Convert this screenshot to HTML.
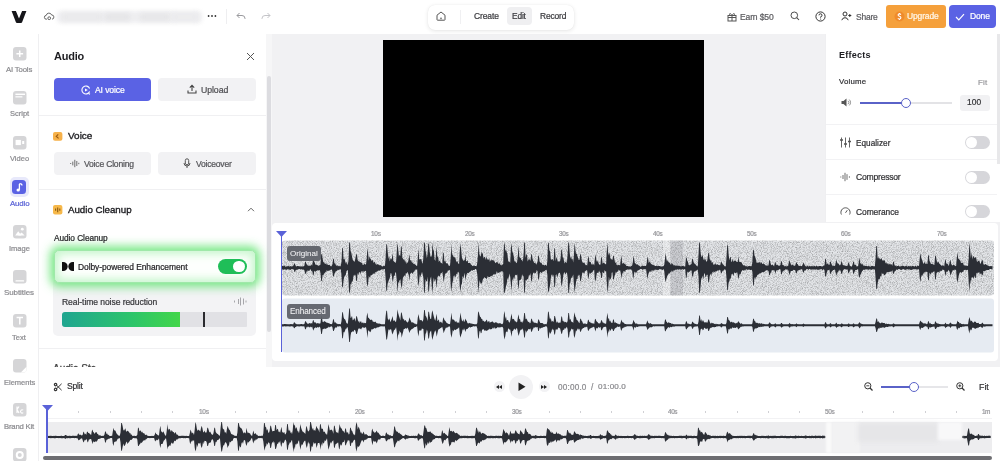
<!DOCTYPE html>
<html><head><meta charset="utf-8">
<style>
*{box-sizing:border-box;margin:0;padding:0}
html,body{width:1000px;height:461px;overflow:hidden;background:#fff;font-family:"Liberation Sans",sans-serif;color:#2a2a2e}
.a{position:absolute}
.t{position:absolute;white-space:nowrap;line-height:1;will-change:transform}
svg{position:absolute;overflow:visible}
</style></head><body>

<!-- canvas gray area -->
<div class="a" style="left:271px;top:34px;width:729px;height:334px;background:#f1f1f3"></div>

<!-- TOP BAR -->
<div class="a" style="left:0;top:0;width:1000px;height:34px;background:#fff"></div>
<svg style="left:11.2px;top:10.8px" width="16" height="12" viewBox="0 0 16 12"><path d="M0.6 0H4.9L8 7.4L11.1 0H15.4L11.1 11.2Q10.8 12 10 12H6Q5.2 12 4.9 11.2Z" fill="#16161a"/></svg>
<svg style="left:43.5px;top:12px" width="10" height="8" viewBox="0 0 10 8"><path d="M3 7.2H2.4A1.9 1.9 0 0 1 2.2 3.4A2.8 2.8 0 0 1 7.6 3A2.1 2.1 0 0 1 8 7.2" fill="none" stroke="#555" stroke-width="0.9"/><circle cx="5.2" cy="6.2" r="1.4" fill="none" stroke="#555" stroke-width="0.9"/></svg>
<div class="a" style="left:57px;top:11px;width:145px;height:12px;background:#efeff1;filter:blur(2px);border-radius:4px"></div>
<div class="a" style="left:62px;top:13px;width:40px;height:8px;background:#e9e9eb;filter:blur(2.5px)"></div>
<div class="a" style="left:105px;top:13px;width:25px;height:8px;background:#e5e5e7;filter:blur(2.5px)"></div>
<div class="a" style="left:140px;top:13px;width:30px;height:8px;background:#e6e6e8;filter:blur(2.5px)"></div>
<div class="a" style="left:172px;top:13px;width:26px;height:8px;background:#ebebed;filter:blur(2.5px)"></div>
<svg style="left:207px;top:14px" width="10" height="4" viewBox="0 0 10 4"><circle cx="1.6" cy="2" r="0.9" fill="#333"/><circle cx="5" cy="2" r="0.9" fill="#333"/><circle cx="8.4" cy="2" r="0.9" fill="#333"/></svg>
<div class="a" style="left:226px;top:9px;width:1px;height:15px;background:#eeeef0"></div>
<svg style="left:236px;top:12px" width="10" height="8" viewBox="0 0 10 8"><path d="M3.5 1L1 3.5L3.5 6M1 3.5H6A3 3 0 0 1 9 6.5V7" fill="none" stroke="#9a9a9e" stroke-width="1"/></svg>
<svg style="left:261px;top:12px" width="10" height="8" viewBox="0 0 10 8"><path d="M6.5 1L9 3.5L6.5 6M9 3.5H4A3 3 0 0 0 1 6.5V7" fill="none" stroke="#c4c4c8" stroke-width="1"/></svg>

<!-- center pill -->
<div class="a" style="left:428px;top:5px;width:146px;height:25px;background:#fff;border-radius:7px;box-shadow:0 1px 4px rgba(0,0,0,0.10),0 0 1px rgba(0,0,0,0.08)"></div>
<svg style="left:436px;top:11px" width="10" height="10" viewBox="0 0 10 10"><path d="M1 4.2L5 1L9 4.2V8.6A.6.6 0 0 1 8.4 9.2H1.6A.6.6 0 0 1 1 8.6Z" fill="none" stroke="#555" stroke-width="1"/><rect x="4.2" y="6.6" width="1.6" height="1.6" fill="#777"/></svg>
<div class="a" style="left:460px;top:10px;width:1px;height:14px;background:#f0f0f2"></div>
<div class="a" style="left:507px;top:7px;width:25px;height:18px;background:#efeff1;border-radius:4px"></div>

<!-- right top -->
<svg style="left:727px;top:12px" width="10" height="10" viewBox="0 0 10 10"><rect x="1" y="3.5" width="8" height="5.5" fill="none" stroke="#555" stroke-width="1"/><path d="M1 5.5H9M5 3.5V9M5 3.5C3.5 0.5 1.5 1.5 3 3.5M5 3.5C6.5 0.5 8.5 1.5 7 3.5" fill="none" stroke="#555" stroke-width="1"/></svg>
<svg style="left:790px;top:11px" width="10" height="10" viewBox="0 0 10 10"><circle cx="4.3" cy="4.3" r="3.3" fill="none" stroke="#444" stroke-width="0.95"/><path d="M6.7 6.7L9 9" stroke="#444" stroke-width="1.05"/></svg>
<svg style="left:815px;top:11px" width="11" height="11" viewBox="0 0 11 11"><circle cx="5.5" cy="5.5" r="4.6" fill="none" stroke="#333" stroke-width="1"/><path d="M4 4.3A1.5 1.5 0 1 1 5.6 5.8V6.6" fill="none" stroke="#333" stroke-width="1"/><circle cx="5.6" cy="8" r=".6" fill="#333"/></svg>
<svg style="left:841px;top:11px" width="11" height="10" viewBox="0 0 11 10"><circle cx="4" cy="3" r="2" fill="none" stroke="#333" stroke-width="1"/><path d="M0.8 9.2A3.3 3.3 0 0 1 7.2 9.2" fill="none" stroke="#333" stroke-width="1"/><path d="M8.8 3V6M7.3 4.5H10.3" stroke="#333" stroke-width="1"/></svg>
<div class="a" style="left:886px;top:5px;width:60px;height:23px;background:#f5a03b;border-radius:3px"></div>
<svg style="left:893.5px;top:11px" width="11" height="11" viewBox="0 0 11 11"><circle cx="5.5" cy="5.5" r="5" fill="#ef8b2c"/><path d="M6.9 3.6Q6.4 2.9 5.4 2.9Q4.1 2.9 4.1 4Q4.1 4.9 5.5 5.3Q6.9 5.7 6.9 6.8Q6.9 8 5.5 8Q4.4 8 3.9 7.2M5.5 2V2.9M5.5 8V9" fill="none" stroke="#fff" stroke-width="1.1"/></svg>
<div class="a" style="left:949px;top:5px;width:47px;height:23px;background:#5a62e4;border-radius:4px"></div>
<svg style="left:955px;top:13px" width="10" height="8" viewBox="0 0 10 8"><path d="M1 4L3.8 6.8L9 1.2" fill="none" stroke="#fff" stroke-width="1.2"/></svg>

<!-- LEFT SIDEBAR -->
<div class="a" style="left:38px;top:34px;width:1px;height:427px;background:#efeff1"></div>
<svg style="left:12.5px;top:46.6px" width="13.5" height="13.5" viewBox="0 0 13.5 13.5"><rect width="13.5" height="13.5" rx="3" fill="#d5d5d7"/><path d="M6.75 3.4V10.1M3.4 6.75H10.1" stroke="#fff" stroke-width="1.5"/></svg>
<svg style="left:12.5px;top:91.1px" width="13.5" height="13.5" viewBox="0 0 13.5 13.5"><rect width="13.5" height="13.5" rx="3" fill="#d5d5d7"/><rect x="2.4" y="2.6" width="9.6" height="1.4" fill="#fff"/><rect x="2.4" y="5.1" width="7" height="1.4" fill="#fff" opacity=".85"/></svg>
<svg style="left:12.5px;top:136.0px" width="13.5" height="13.5" viewBox="0 0 13.5 13.5"><rect width="13.5" height="13.5" rx="3" fill="#d5d5d7"/><rect x="2.6" y="3.9" width="5.3" height="5.2" fill="#fff"/><rect x="9.2" y="5" width="2" height="3" fill="#fff"/></svg>
<div class="a" style="left:9.6px;top:177.2px;width:19.4px;height:19.4px;background:#e8e9fb;border-radius:5px"></div>
<div class="a" style="left:12.3px;top:180px;width:14px;height:14px;background:#5a62e4;border-radius:3.5px"></div>
<svg style="left:16px;top:183px" width="7" height="9" viewBox="0 0 7 9"><path d="M3.4 0.9V6.8" stroke="#fff" stroke-width="1.3"/><path d="M3.4 0.6Q6 0.6 6 2.6" stroke="#fff" stroke-width="1.2" fill="none"/><ellipse cx="2.2" cy="7.1" rx="1.7" ry="1.5" fill="#fff"/></svg>
<svg style="left:12.5px;top:224.5px" width="13.5" height="13.5" viewBox="0 0 13.5 13.5"><rect width="13.5" height="13.5" rx="3" fill="#d5d5d7"/><path d="M2.2 10.4L5.2 6.2L8.4 10.4Z" fill="#fff"/><path d="M5 10.4L8.6 7.6L11.6 10.4Z" fill="#fff"/><circle cx="9.3" cy="4.2" r="1.4" fill="#fff"/></svg>
<svg style="left:12.5px;top:269.5px" width="13.5" height="13.5" viewBox="0 0 13.5 13.5"><rect width="13.5" height="13.5" rx="3" fill="#d5d5d7"/><rect x="2.4" y="10.2" width="8.8" height="1.4" rx=".7" fill="#fff"/></svg>
<svg style="left:12.5px;top:314.0px" width="13.5" height="13.5" viewBox="0 0 13.5 13.5"><rect width="13.5" height="13.5" rx="3" fill="#d5d5d7"/><path d="M3.6 3.6H10M6.8 3.6V10.6" stroke="#fff" stroke-width="1.5"/></svg>
<svg style="left:12.5px;top:358.5px" width="13.5" height="13.5" viewBox="0 0 13.5 13.5"><rect width="13.5" height="13.5" rx="3" fill="#d5d5d7"/><path d="M7.8 13.5L13.5 7.8V10.5A3 3 0 0 1 10.5 13.5Z" fill="#fff"/></svg>
<svg style="left:12.5px;top:403.3px" width="13.5" height="13.5" viewBox="0 0 13.5 13.5"><rect width="13.5" height="13.5" rx="3" fill="#d5d5d7"/><path d="M4 3.5V10M4 6.5L6 3.5M4 6.5L6 10" stroke="#fff" stroke-width="1.2" fill="none"/><path d="M10.2 7.2A1.6 1.6 0 1 0 10.2 9.6" stroke="#fff" stroke-width="1.1" fill="none"/></svg>
<svg style="left:12.5px;top:447.8px" width="13.5" height="13.5" viewBox="0 0 13.5 13.5"><rect width="13.5" height="13.5" rx="3" fill="#d5d5d7"/><circle cx="6.75" cy="7" r="3" stroke="#fff" stroke-width="2" fill="none"/></svg>

<!-- AUDIO PANEL -->
<div class="a" style="left:39px;top:34px;width:232px;height:333px;background:#fff"></div>
<svg style="left:246px;top:52px" width="9" height="9" viewBox="0 0 9 9"><path d="M1 1L8 8M8 1L1 8" stroke="#555" stroke-width="1"/></svg>
<div class="a" style="left:266px;top:34px;width:6px;height:333px;background:#f6f6f7"></div>
<div class="a" style="left:267px;top:76px;width:4px;height:256px;background:#dcdce0;border-radius:2px"></div>

<div class="a" style="left:54px;top:78px;width:97px;height:23px;background:#5a62e4;border-radius:4px"></div>
<svg style="left:81px;top:85px" width="10" height="10" viewBox="0 0 10 10"><path d="M8.6 6.5A4 4 0 1 1 8.6 3.5" fill="none" stroke="#fff" stroke-width="1.1"/><path d="M4 3.4L6.8 5L4 6.6Z" fill="#fff"/><path d="M7.5 8.5L9 9.3" stroke="#fff" stroke-width="1.1"/></svg>
<div class="a" style="left:158px;top:78px;width:98px;height:23px;background:#f2f2f4;border-radius:4px"></div>
<svg style="left:187px;top:84px" width="10" height="10" viewBox="0 0 10 10"><path d="M5 7V1.5M2.8 3.6L5 1.4L7.2 3.6M1 6.5V9H9V6.5" fill="none" stroke="#444" stroke-width="1.1"/></svg>

<div class="a" style="left:39px;top:115px;width:227px;height:1px;background:#f0f0f2"></div>
<svg style="left:53.3px;top:131.8px" width="9.4" height="8.8" viewBox="0 0 9.4 8.8"><rect width="9.4" height="8.8" rx="2" fill="#f6b14a"/><path d="M5.2 2.4L3.3 4.4L5.6 6.4" fill="none" stroke="#9a5a10" stroke-width="1.2"/></svg>
<div class="a" style="left:54px;top:152px;width:97px;height:23px;background:#f2f2f4;border-radius:4px"></div>
<svg style="left:70px;top:159px" width="10" height="9" viewBox="0 0 10 9"><path d="M0.2 4.5H1.2M2.8 2.6V6.4M4.8 0.8V8.2M6.8 2V7M8.8 3.8V5.2" stroke="#555" stroke-width="0.85"/></svg>
<div class="a" style="left:158px;top:152px;width:98px;height:23px;background:#f2f2f4;border-radius:4px"></div>
<svg style="left:183px;top:158px" width="8" height="11" viewBox="0 0 8 11"><rect x="2.3" y="0.8" width="3.4" height="6" rx="1.7" fill="none" stroke="#555" stroke-width="1"/><path d="M1 5A3 3 0 0 0 7 5M4 8V10" fill="none" stroke="#555" stroke-width="1"/></svg>

<div class="a" style="left:39px;top:189px;width:227px;height:1px;background:#f0f0f2"></div>
<svg style="left:53.3px;top:205.3px" width="9.4" height="9.4" viewBox="0 0 9.4 9.4"><rect width="9.4" height="9.4" rx="2" fill="#f6b84a"/><path d="M2.6 3.6V5.8M4.7 2.4V7.2M6.8 3.6V5.8" stroke="#8a5a10" stroke-width="1.1"/></svg>
<svg style="left:247px;top:207px" width="8" height="5" viewBox="0 0 8 5"><path d="M1 4.2L4 1.2L7 4.2" fill="none" stroke="#666" stroke-width="1"/></svg>

<!-- noise reduction card -->
<div class="a" style="left:53px;top:278px;width:203px;height:58px;background:#f3f3f5;border-radius:5px"></div>
<svg style="left:233px;top:297px" width="14" height="9" viewBox="0 0 14 9"><path d="M1.5 3.5V5.5M5.5 2V7M7.5 0.5V8.5M10.5 1.5V7.5M13 3.5V5.5" stroke="#a6a6aa" stroke-width="1"/></svg>
<div class="a" style="left:62px;top:312px;width:185px;height:15px;background:#e1e1e5;border-radius:3px 1px 1px 3px"></div>
<div class="a" style="left:62px;top:312px;width:118px;height:15px;background:linear-gradient(90deg,#1fa590,#2dc56a 60%,#43d64a);border-radius:3px 0 0 3px"></div>
<div class="a" style="left:203px;top:312px;width:1.5px;height:15px;background:#2a2a2e"></div>

<!-- dolby card -->
<div class="a" style="left:54px;top:250px;width:202px;height:33px;border-radius:5px;background:#fdfffd;border:1px solid #9fe8a9;box-shadow:0 0 10px 4px rgba(100,228,115,0.85), inset 0 0 8px 3px rgba(150,236,160,0.55)"></div>
<svg style="left:62px;top:262px" width="12" height="9" viewBox="0 0 12 9"><path d="M0 0H1.2A4.5 4.5 0 0 1 1.2 9H0Z M12 0H10.8A4.5 4.5 0 0 0 10.8 9H12Z" fill="#111"/></svg>
<div class="a" style="left:218px;top:259px;width:29px;height:14.5px;background:#1fbe58;border-radius:8px"></div>
<div class="a" style="left:233px;top:260.5px;width:11.5px;height:11.5px;background:#fff;border-radius:50%"></div>

<div class="a" style="left:39px;top:348px;width:227px;height:1px;background:#f0f0f2"></div>
<div class="t" style="left:53px;top:363.6px;font-size:10px;color:#444;-webkit-text-stroke:0.3px #444;height:3.4px;overflow:hidden">Audio Sta</div>

<!-- VIDEO -->
<div class="a" style="left:383px;top:40px;width:321px;height:177px;background:#000"></div>

<!-- EFFECTS PANEL -->
<div class="a" style="left:825px;top:34px;width:175px;height:188px;background:#fff;border-left:1px solid #efeff1"></div>
<div class="a" style="left:997px;top:34px;width:3px;height:130px;background:#e8e8ea"></div>
<svg style="left:841px;top:98px" width="10" height="9" viewBox="0 0 10 9"><path d="M0.5 3H2.5L5.5 0.5V8.5L2.5 6H0.5Z" fill="#555"/><path d="M7 2.8A2.3 2.3 0 0 1 7 6.2M8.3 1.6A4 4 0 0 1 8.3 7.4" fill="none" stroke="#777" stroke-width="0.8"/></svg>
<div class="a" style="left:860px;top:102px;width:92px;height:1.5px;background:#e3e3e6"></div>
<div class="a" style="left:860px;top:102px;width:46px;height:2px;background:#5a62c8"></div>
<div class="a" style="left:901px;top:97.5px;width:10px;height:10px;border:1.8px solid #5a62c8;background:#fff;border-radius:50%"></div>
<div class="a" style="left:959.5px;top:94.5px;width:30px;height:16.5px;background:#f1f1f3;border-radius:3px"></div>

<div class="a" style="left:826px;top:124px;width:171px;height:1px;background:#f2f2f4"></div>
<div class="a" style="left:826px;top:159px;width:171px;height:1px;background:#f2f2f4"></div>
<div class="a" style="left:826px;top:194px;width:171px;height:1px;background:#f2f2f4"></div>
<svg style="left:839.5px;top:137px" width="11" height="11" viewBox="0 0 11 11"><path d="M1.5 0.5V10.5M5.5 0.5V10.5M9.5 0.5V10.5" stroke="#555" stroke-width="0.9"/><path d="M0 3H3M4 7H7M8 4.5H11" stroke="#555" stroke-width="1.3"/></svg>
<svg style="left:839.5px;top:172px" width="11" height="10" viewBox="0 0 11 10"><path d="M0.3 5H1.3M3 3V7M5 0.8V9.2M7 2.2V7.8M9.4 4.3V5.7" stroke="#555" stroke-width="0.85"/></svg>
<svg style="left:839.5px;top:206px" width="11" height="10" viewBox="0 0 11 10"><path d="M1.4 8.5A4.6 4.6 0 1 1 9.6 8.5" fill="none" stroke="#555" stroke-width="1"/><path d="M5.5 6.8L7.3 4.2" stroke="#555" stroke-width="1"/></svg>
<div class="a" style="left:964.5px;top:136px;width:25px;height:13px;background:#d6d6da;border-radius:7px"></div>
<div class="a" style="left:965.5px;top:137px;width:11px;height:11px;background:#fff;border-radius:50%"></div>
<div class="a" style="left:964.5px;top:171px;width:25px;height:13px;background:#d6d6da;border-radius:7px"></div>
<div class="a" style="left:965.5px;top:172px;width:11px;height:11px;background:#fff;border-radius:50%"></div>
<div class="a" style="left:964.5px;top:205px;width:25px;height:13px;background:#d6d6da;border-radius:7px"></div>
<div class="a" style="left:965.5px;top:206px;width:11px;height:11px;background:#fff;border-radius:50%"></div>

<!-- COMPARE PANEL -->
<div class="a" style="left:272px;top:222.5px;width:726px;height:138.3px;background:#fff;border-radius:4px"></div>
<svg style="left:0;top:0" width="1000" height="461" viewBox="0 0 1000 461">
<defs>
<filter id="nz" x="0" y="0" width="100%" height="100%">
<feTurbulence type="fractalNoise" baseFrequency="1.2" numOctaves="1" seed="4" result="n"/>
<feColorMatrix in="n" type="matrix" values="0 0 0 0 0  0 0 0 0 0  0 0 0 0 0  0 0 0 -2.2 1.3"/>
</filter>
<clipPath id="oc"><rect x="282" y="240.5" width="712" height="55" rx="3"/></clipPath>
</defs>
<rect x="282" y="240.5" width="712" height="55" rx="3" fill="#e3e5e8"/>
<rect x="282" y="240.5" width="712" height="55" fill="#9a9ca2" filter="url(#nz)" clip-path="url(#oc)" opacity="0.32"/>
<rect x="663" y="240.5" width="7" height="55" fill="#fff" opacity="0.3"/>
<rect x="670.5" y="240.5" width="12.5" height="55" fill="#7a7c82" opacity="0.22"/>
<path d="M282.0 265.8 L282.7 265.9 L283.4 266.2 L284.1 265.6 L284.8 265.8 L285.5 266.7 L286.2 266.5 L286.9 266.2 L287.6 266.2 L288.3 266.1 L289.0 266.3 L289.7 266.4 L290.4 265.9 L291.1 266.5 L291.8 266.3 L292.5 266.3 L293.2 266.0 L293.9 264.3 L294.6 263.3 L295.3 264.7 L296.0 266.4 L296.7 266.2 L297.4 266.1 L298.1 265.9 L298.8 266.2 L299.5 266.3 L300.2 266.5 L300.9 266.3 L301.6 266.5 L302.3 266.6 L303.0 266.3 L303.7 266.5 L304.4 265.6 L305.1 261.8 L305.8 261.8 L306.5 264.2 L307.2 264.5 L307.9 265.7 L308.6 265.7 L309.3 265.4 L310.0 265.9 L310.7 265.6 L311.4 264.5 L312.1 265.8 L312.8 261.3 L313.5 259.4 L314.2 261.4 L314.9 262.9 L315.6 265.1 L316.3 264.4 L317.0 265.1 L317.7 265.3 L318.4 266.0 L319.1 264.9 L319.8 265.5 L320.5 264.2 L321.2 254.2 L321.9 254.2 L322.6 258.4 L323.3 261.9 L324.0 262.6 L324.7 263.4 L325.4 264.0 L326.1 262.9 L326.8 264.7 L327.5 264.2 L328.2 265.1 L328.9 265.1 L329.6 264.7 L330.3 265.7 L331.0 266.4 L331.7 266.1 L332.4 264.5 L333.1 258.8 L333.8 258.8 L334.5 263.6 L335.2 263.3 L335.9 265.2 L336.6 265.7 L337.3 265.2 L338.0 266.4 L338.7 265.8 L339.4 266.1 L340.1 266.4 L340.8 265.7 L341.5 261.4 L342.2 247.9 L342.9 247.9 L343.6 259.6 L344.3 258.3 L345.0 260.2 L345.7 263.6 L346.4 261.4 L347.1 264.8 L347.8 264.2 L348.5 260.6 L349.2 242.4 L349.9 242.4 L350.6 251.0 L351.3 252.5 L352.0 256.6 L352.7 259.4 L353.4 260.8 L354.1 261.4 L354.8 261.6 L355.5 257.6 L356.2 254.2 L356.9 254.2 L357.6 259.6 L358.3 261.5 L359.0 260.8 L359.7 262.1 L360.4 262.0 L361.1 262.9 L361.8 262.3 L362.5 264.8 L363.2 264.7 L363.9 264.4 L364.6 263.6 L365.3 264.2 L366.0 264.8 L366.7 258.6 L367.4 247.9 L368.1 252.6 L368.8 260.7 L369.5 256.0 L370.2 258.2 L370.9 259.3 L371.6 261.1 L372.3 260.1 L373.0 260.5 L373.7 263.1 L374.4 261.5 L375.1 262.7 L375.8 264.3 L376.5 264.7 L377.2 264.0 L377.9 264.5 L378.6 264.6 L379.3 265.0 L380.0 265.4 L380.7 265.1 L381.4 265.8 L382.1 266.6 L382.8 266.6 L383.5 265.8 L384.2 265.7 L384.9 266.3 L385.6 258.6 L386.3 244.3 L387.0 244.3 L387.7 251.8 L388.4 258.9 L389.1 255.9 L389.8 261.6 L390.5 258.3 L391.2 259.6 L391.9 258.0 L392.6 252.7 L393.3 260.8 L394.0 261.6 L394.7 262.1 L395.4 263.0 L396.1 261.4 L396.8 251.1 L397.5 242.4 L398.2 249.3 L398.9 256.5 L399.6 254.8 L400.3 256.3 L401.0 246.5 L401.7 246.7 L402.4 257.7 L403.1 258.7 L403.8 259.7 L404.5 259.6 L405.2 262.7 L405.9 260.0 L406.6 263.9 L407.3 262.6 L408.0 262.5 L408.7 258.6 L409.4 254.2 L410.1 260.6 L410.8 259.9 L411.5 261.5 L412.2 262.9 L412.9 262.6 L413.6 263.9 L414.3 263.8 L415.0 264.6 L415.7 264.8 L416.4 265.7 L417.1 266.0 L417.8 257.9 L418.5 248.2 L419.2 259.1 L419.9 259.5 L420.6 259.1 L421.3 259.3 L422.0 262.3 L422.7 263.7 L423.4 257.3 L424.1 242.4 L424.8 242.4 L425.5 250.5 L426.2 253.5 L426.9 258.6 L427.6 253.2 L428.3 243.7 L429.0 243.7 L429.7 251.8 L430.4 256.5 L431.1 256.8 L431.8 256.0 L432.5 242.4 L433.2 249.4 L433.9 251.1 L434.6 259.6 L435.3 261.0 L436.0 253.8 L436.7 246.7 L437.4 257.1 L438.1 256.2 L438.8 262.0 L439.5 260.4 L440.2 261.2 L440.9 263.0 L441.6 263.1 L442.3 264.0 L443.0 253.1 L443.7 252.7 L444.4 262.1 L445.1 260.1 L445.8 262.4 L446.5 263.4 L447.2 263.3 L447.9 263.7 L448.6 265.6 L449.3 266.0 L450.0 265.8 L450.7 257.7 L451.4 243.7 L452.1 255.7 L452.8 253.7 L453.5 257.0 L454.2 257.2 L454.9 257.3 L455.6 258.5 L456.3 262.4 L457.0 260.6 L457.7 262.1 L458.4 264.1 L459.1 263.9 L459.8 250.5 L460.5 243.1 L461.2 250.2 L461.9 257.5 L462.6 259.1 L463.3 261.3 L464.0 259.4 L464.7 260.7 L465.4 254.2 L466.1 261.6 L466.8 261.1 L467.5 260.0 L468.2 262.9 L468.9 263.0 L469.6 262.7 L470.3 263.0 L471.0 264.7 L471.7 264.9 L472.4 265.9 L473.1 265.9 L473.8 265.2 L474.5 265.7 L475.2 266.1 L475.9 265.9 L476.6 266.3 L477.3 262.6 L478.0 253.5 L478.7 242.4 L479.4 254.1 L480.1 256.3 L480.8 256.2 L481.5 251.9 L482.2 252.8 L482.9 254.0 L483.6 258.4 L484.3 256.9 L485.0 256.7 L485.7 260.0 L486.4 255.8 L487.1 260.3 L487.8 258.6 L488.5 260.2 L489.2 258.0 L489.9 261.8 L490.6 260.4 L491.3 259.6 L492.0 260.7 L492.7 259.8 L493.4 260.5 L494.1 260.6 L494.8 262.0 L495.5 263.2 L496.2 262.4 L496.9 261.8 L497.6 262.5 L498.3 263.4 L499.0 264.1 L499.7 263.1 L500.4 264.8 L501.1 265.1 L501.8 265.6 L502.5 264.4 L503.2 264.0 L503.9 244.9 L504.6 242.4 L505.3 251.4 L506.0 249.0 L506.7 252.2 L507.4 253.5 L508.1 260.6 L508.8 261.9 L509.5 261.5 L510.2 263.0 L510.9 247.8 L511.6 243.7 L512.3 251.7 L513.0 252.9 L513.7 256.0 L514.4 261.4 L515.1 260.9 L515.8 262.2 L516.5 263.3 L517.2 261.6 L517.9 254.4 L518.6 245.2 L519.3 256.5 L520.0 258.0 L520.7 257.7 L521.4 260.3 L522.1 259.8 L522.8 261.7 L523.5 255.6 L524.2 242.4 L524.9 242.4 L525.6 257.7 L526.3 254.2 L527.0 254.6 L527.7 261.5 L528.4 259.8 L529.1 258.6 L529.8 260.1 L530.5 260.7 L531.2 254.2 L531.9 254.2 L532.6 259.0 L533.3 261.0 L534.0 262.5 L534.7 262.9 L535.4 262.5 L536.1 264.8 L536.8 263.4 L537.5 262.0 L538.2 255.8 L538.9 255.8 L539.6 261.6 L540.3 263.1 L541.0 262.3 L541.7 263.2 L542.4 264.8 L543.1 265.1 L543.8 264.8 L544.5 265.5 L545.2 265.1 L545.9 265.1 L546.6 266.2 L547.3 261.5 L548.0 243.4 L548.7 242.4 L549.4 250.5 L550.1 251.1 L550.8 259.3 L551.5 259.8 L552.2 258.9 L552.9 259.4 L553.6 261.3 L554.3 248.2 L555.0 248.2 L555.7 261.1 L556.4 257.4 L557.1 258.3 L557.8 261.8 L558.5 261.6 L559.2 260.8 L559.9 262.1 L560.6 258.0 L561.3 249.7 L562.0 249.7 L562.7 257.4 L563.4 257.6 L564.1 261.4 L564.8 263.6 L565.5 261.5 L566.2 262.0 L566.9 263.3 L567.6 254.1 L568.3 242.4 L569.0 242.4 L569.7 252.5 L570.4 258.8 L571.1 255.8 L571.8 259.4 L572.5 258.5 L573.2 262.6 L573.9 254.9 L574.6 242.4 L575.3 249.1 L576.0 253.8 L576.7 253.5 L577.4 255.7 L578.1 257.9 L578.8 260.0 L579.5 259.8 L580.2 254.2 L580.9 254.2 L581.6 259.1 L582.3 262.5 L583.0 262.2 L583.7 263.0 L584.4 262.5 L585.1 264.2 L585.8 265.3 L586.5 265.0 L587.2 265.6 L587.9 258.4 L588.6 255.8 L589.3 261.6 L590.0 261.9 L590.7 262.0 L591.4 264.1 L592.1 265.1 L592.8 263.7 L593.5 264.3 L594.2 265.6 L594.9 258.5 L595.6 254.2 L596.3 259.8 L597.0 262.1 L597.7 260.8 L598.4 262.4 L599.1 264.8 L599.8 264.5 L600.5 264.8 L601.2 257.3 L601.9 257.3 L602.6 264.0 L603.3 262.4 L604.0 263.1 L604.7 263.6 L605.4 263.9 L606.1 264.6 L606.8 250.7 L607.5 242.4 L608.2 255.6 L608.9 252.6 L609.6 253.6 L610.3 257.8 L611.0 259.5 L611.7 259.2 L612.4 260.1 L613.1 255.8 L613.8 255.8 L614.5 259.7 L615.2 263.2 L615.9 262.0 L616.6 264.7 L617.3 265.4 L618.0 264.4 L618.7 264.9 L619.4 265.1 L620.1 265.4 L620.8 259.1 L621.5 255.8 L622.2 263.0 L622.9 264.0 L623.6 262.5 L624.3 263.7 L625.0 264.0 L625.7 264.7 L626.4 265.9 L627.1 265.9 L627.8 266.0 L628.5 266.5 L629.2 266.2 L629.9 266.5 L630.6 266.7 L631.3 265.7 L632.0 265.8 L632.7 263.3 L633.4 255.8 L634.1 258.7 L634.8 263.1 L635.5 263.4 L636.2 264.4 L636.9 264.4 L637.6 264.3 L638.3 265.1 L639.0 265.7 L639.7 265.9 L640.4 266.7 L641.1 266.5 L641.8 265.8 L642.5 265.8 L643.2 266.1 L643.9 265.9 L644.6 265.8 L645.3 266.0 L646.0 266.1 L646.7 263.6 L647.4 256.4 L648.1 259.0 L648.8 263.2 L649.5 261.3 L650.2 262.8 L650.9 263.4 L651.6 264.3 L652.3 264.4 L653.0 265.3 L653.7 264.9 L654.4 265.4 L655.1 266.0 L655.8 266.1 L656.5 265.8 L657.2 266.2 L657.9 265.7 L658.6 265.8 L659.3 266.1 L660.0 266.1 L660.7 266.5 L661.4 266.6 L662.1 266.3 L662.8 266.5 L663.5 266.0 L664.2 265.0 L664.9 259.3 L665.6 252.7 L666.3 257.9 L667.0 261.8 L667.7 260.0 L668.4 261.7 L669.1 262.8 L669.8 262.6 L670.5 264.9 L671.2 262.8 L671.9 264.7 L672.6 263.6 L673.3 264.7 L674.0 265.8 L674.7 265.1 L675.4 265.7 L676.1 265.5 L676.8 265.7 L677.5 265.6 L678.2 266.1 L678.9 265.7 L679.6 266.0 L680.3 266.1 L681.0 266.7 L681.7 266.1 L682.4 265.9 L683.1 265.7 L683.8 266.2 L684.5 266.4 L685.2 266.5 L685.9 258.6 L686.6 257.3 L687.3 260.7 L688.0 262.0 L688.7 265.0 L689.4 265.4 L690.1 264.4 L690.8 264.8 L691.5 263.8 L692.2 258.8 L692.9 258.8 L693.6 262.2 L694.3 263.3 L695.0 264.2 L695.7 264.6 L696.4 265.6 L697.1 266.2 L697.8 266.3 L698.5 255.3 L699.2 242.4 L699.9 242.4 L700.6 252.4 L701.3 257.3 L702.0 255.9 L702.7 255.4 L703.4 259.1 L704.1 260.6 L704.8 258.3 L705.5 259.6 L706.2 261.3 L706.9 261.8 L707.6 258.7 L708.3 252.7 L709.0 252.7 L709.7 259.1 L710.4 260.8 L711.1 260.0 L711.8 262.9 L712.5 261.7 L713.2 264.2 L713.9 264.9 L714.6 264.3 L715.3 262.9 L716.0 264.8 L716.7 264.4 L717.4 264.3 L718.1 265.1 L718.8 264.7 L719.5 265.2 L720.2 265.3 L720.9 262.5 L721.6 261.8 L722.3 263.6 L723.0 264.5 L723.7 265.0 L724.4 265.9 L725.1 266.5 L725.8 266.0 L726.5 257.3 L727.2 245.2 L727.9 245.2 L728.6 254.1 L729.3 260.2 L730.0 257.8 L730.7 256.5 L731.4 262.2 L732.1 260.9 L732.8 258.4 L733.5 261.9 L734.2 260.8 L734.9 260.7 L735.6 260.6 L736.3 261.4 L737.0 262.1 L737.7 262.1 L738.4 255.8 L739.1 262.0 L739.8 261.7 L740.5 262.1 L741.2 262.3 L741.9 263.1 L742.6 264.4 L743.3 265.6 L744.0 265.0 L744.7 265.6 L745.4 266.4 L746.1 265.6 L746.8 266.4 L747.5 266.4 L748.2 266.1 L748.9 266.2 L749.6 265.7 L750.3 266.6 L751.0 265.6 L751.7 266.4 L752.4 261.7 L753.1 249.7 L753.8 249.7 L754.5 255.8 L755.2 256.7 L755.9 259.5 L756.6 262.9 L757.3 262.4 L758.0 262.8 L758.7 262.5 L759.4 261.4 L760.1 263.7 L760.8 262.2 L761.5 262.3 L762.2 263.8 L762.9 264.1 L763.6 263.3 L764.3 264.1 L765.0 264.8 L765.7 265.5 L766.4 265.5 L767.1 265.4 L767.8 265.4 L768.5 265.4 L769.2 260.3 L769.9 260.3 L770.6 263.6 L771.3 265.6 L772.0 264.6 L772.7 264.7 L773.4 265.5 L774.1 266.5 L774.8 262.8 L775.5 261.8 L776.2 265.2 L776.9 264.2 L777.6 265.1 L778.3 265.5 L779.0 265.7 L779.7 265.7 L780.4 265.1 L781.1 261.2 L781.8 261.2 L782.5 264.9 L783.2 265.1 L783.9 265.6 L784.6 266.4 L785.3 265.7 L786.0 266.6 L786.7 266.3 L787.4 265.9 L788.1 266.2 L788.8 262.3 L789.5 260.3 L790.2 262.6 L790.9 264.4 L791.6 265.6 L792.3 264.5 L793.0 264.8 L793.7 265.8 L794.4 265.7 L795.1 265.7 L795.8 263.8 L796.5 261.8 L797.2 263.9 L797.9 264.2 L798.6 265.8 L799.3 266.1 L800.0 265.8 L800.7 265.8 L801.4 266.2 L802.1 265.7 L802.8 264.2 L803.5 262.4 L804.2 264.1 L804.9 265.4 L805.6 266.3 L806.3 266.5 L807.0 266.3 L807.7 265.7 L808.4 266.6 L809.1 266.2 L809.8 265.8 L810.5 266.6 L811.2 265.7 L811.9 266.5 L812.6 265.9 L813.3 266.6 L814.0 265.6 L814.7 265.9 L815.4 266.7 L816.1 265.7 L816.8 265.8 L817.5 266.6 L818.2 266.6 L818.9 265.9 L819.6 266.1 L820.3 266.0 L821.0 265.9 L821.7 266.6 L822.4 266.5 L823.1 265.8 L823.8 265.7 L824.5 265.2 L825.2 258.8 L825.9 258.8 L826.6 264.5 L827.3 263.3 L828.0 263.9 L828.7 264.7 L829.4 265.0 L830.1 261.8 L830.8 261.8 L831.5 264.1 L832.2 265.2 L832.9 266.2 L833.6 265.5 L834.3 265.7 L835.0 266.1 L835.7 262.4 L836.4 259.4 L837.1 262.5 L837.8 263.6 L838.5 263.6 L839.2 264.8 L839.9 265.4 L840.6 264.6 L841.3 261.8 L842.0 261.8 L842.7 264.7 L843.4 265.2 L844.1 265.3 L844.8 265.6 L845.5 265.7 L846.2 265.8 L846.9 266.1 L847.6 265.8 L848.3 262.4 L849.0 262.4 L849.7 265.5 L850.4 265.9 L851.1 266.6 L851.8 266.5 L852.5 264.8 L853.2 261.8 L853.9 261.8 L854.6 265.0 L855.3 264.7 L856.0 265.1 L856.7 266.6 L857.4 266.3 L858.1 266.2 L858.8 261.8 L859.5 257.3 L860.2 263.8 L860.9 263.0 L861.6 264.6 L862.3 264.3 L863.0 264.2 L863.7 265.9 L864.4 265.5 L865.1 265.7 L865.8 266.0 L866.5 266.1 L867.2 265.9 L867.9 266.4 L868.6 265.8 L869.3 266.6 L870.0 266.2 L870.7 266.7 L871.4 265.8 L872.1 265.9 L872.8 265.9 L873.5 266.2 L874.2 266.3 L874.9 266.2 L875.6 257.3 L876.3 246.1 L877.0 246.1 L877.7 258.6 L878.4 256.7 L879.1 259.4 L879.8 257.4 L880.5 259.8 L881.2 258.0 L881.9 259.2 L882.6 260.8 L883.3 260.5 L884.0 260.3 L884.7 260.3 L885.4 262.4 L886.1 263.8 L886.8 262.4 L887.5 263.6 L888.2 264.7 L888.9 263.5 L889.6 264.3 L890.3 264.5 L891.0 263.9 L891.7 264.4 L892.4 265.8 L893.1 261.8 L893.8 261.8 L894.5 265.1 L895.2 266.1 L895.9 265.2 L896.6 266.4 L897.3 265.9 L898.0 266.0 L898.7 265.5 L899.4 266.4 L900.1 266.3 L900.8 266.5 L901.5 265.9 L902.2 265.7 L902.9 265.4 L903.6 266.0 L904.3 266.3 L905.0 266.4 L905.7 265.8 L906.4 265.7 L907.1 266.5 L907.8 266.6 L908.5 265.7 L909.2 266.4 L909.9 265.7 L910.6 266.2 L911.3 266.6 L912.0 266.0 L912.7 265.8 L913.4 266.0 L914.1 266.4 L914.8 266.5 L915.5 265.5 L916.2 266.5 L916.9 266.4 L917.6 265.5 L918.3 265.8 L919.0 266.1 L919.7 258.4 L920.4 252.7 L921.1 257.6 L921.8 259.3 L922.5 260.7 L923.2 263.7 L923.9 263.2 L924.6 261.8 L925.3 264.2 L926.0 262.9 L926.7 264.0 L927.4 263.9 L928.1 255.2 L928.8 255.2 L929.5 261.0 L930.2 262.3 L930.9 263.8 L931.6 264.0 L932.3 263.8 L933.0 264.4 L933.7 264.5 L934.4 265.1 L935.1 255.8 L935.8 255.8 L936.5 259.6 L937.2 263.0 L937.9 261.5 L938.6 262.1 L939.3 263.8 L940.0 264.0 L940.7 264.9 L941.4 265.6 L942.1 266.0 L942.8 265.1 L943.5 265.4 L944.2 266.4 L944.9 261.3 L945.6 258.8 L946.3 263.6 L947.0 263.8 L947.7 263.8 L948.4 265.9 L949.1 264.7 L949.8 261.3 L950.5 259.4 L951.2 263.8 L951.9 265.2 L952.6 265.4 L953.3 264.4 L954.0 265.3 L954.7 265.3 L955.4 266.1 L956.1 266.3 L956.8 257.5 L957.5 252.7 L958.2 258.7 L958.9 258.7 L959.6 260.1 L960.3 260.4 L961.0 263.0 L961.7 262.7 L962.4 262.8 L963.1 263.1 L963.8 265.2 L964.5 265.6 L965.2 265.3 L965.9 265.9 L966.6 265.8 L967.3 265.7 L968.0 266.0 L968.7 258.2 L969.4 242.4 L970.1 248.8 L970.8 258.3 L971.5 252.3 L972.2 259.5 L972.9 256.6 L973.6 255.9 L974.3 258.2 L975.0 257.2 L975.7 257.3 L976.4 259.1 L977.1 262.3 L977.8 261.0 L978.5 260.7 L979.2 260.6 L979.9 262.6 L980.6 264.3 L981.3 261.8 L982.0 260.1 L982.7 260.3 L983.4 263.9 L984.1 265.0 L984.8 264.2 L985.5 264.1 L986.2 264.5 L986.9 265.0 L987.6 265.6 L988.3 265.4 L989.0 266.3 L989.7 266.3 L990.4 265.9 L991.1 266.2 L991.8 266.1 L992.5 266.3 L992.5 269.8 L991.8 269.2 L991.1 269.0 L990.4 268.9 L989.7 268.9 L989.0 269.9 L988.3 270.1 L987.6 269.9 L986.9 270.2 L986.2 270.1 L985.5 270.8 L984.8 271.6 L984.1 270.9 L983.4 271.0 L982.7 275.2 L982.0 275.2 L981.3 273.4 L980.6 273.6 L979.9 274.7 L979.2 272.1 L978.5 272.6 L977.8 273.6 L977.1 272.5 L976.4 273.6 L975.7 278.1 L975.0 278.1 L974.3 275.3 L973.6 279.1 L972.9 277.6 L972.2 276.9 L971.5 277.8 L970.8 284.1 L970.1 279.6 L969.4 292.7 L968.7 281.8 L968.0 269.9 L967.3 269.8 L966.6 270.2 L965.9 270.0 L965.2 269.7 L964.5 270.0 L963.8 270.2 L963.1 272.3 L962.4 271.6 L961.7 273.6 L961.0 271.9 L960.3 272.2 L959.6 272.7 L958.9 274.9 L958.2 278.8 L957.5 282.5 L956.8 280.0 L956.1 270.1 L955.4 269.7 L954.7 269.5 L954.0 270.6 L953.3 270.1 L952.6 270.4 L951.9 272.0 L951.2 273.7 L950.5 276.1 L949.8 272.2 L949.1 270.7 L948.4 269.7 L947.7 271.6 L947.0 271.7 L946.3 271.7 L945.6 276.6 L944.9 272.7 L944.2 269.9 L943.5 270.1 L942.8 269.2 L942.1 270.5 L941.4 270.9 L940.7 271.3 L940.0 270.4 L939.3 272.8 L938.6 272.1 L937.9 271.8 L937.2 272.6 L936.5 272.9 L935.8 279.6 L935.1 279.6 L934.4 270.9 L933.7 271.6 L933.0 272.3 L932.3 272.5 L931.6 272.2 L930.9 274.5 L930.2 273.7 L929.5 272.6 L928.8 280.2 L928.1 280.2 L927.4 272.1 L926.7 271.9 L926.0 271.4 L925.3 271.9 L924.6 272.1 L923.9 274.2 L923.2 272.4 L922.5 275.9 L921.8 275.1 L921.1 276.9 L920.4 282.5 L919.7 277.5 L919.0 269.2 L918.3 269.2 L917.6 269.6 L916.9 269.7 L916.2 268.9 L915.5 269.3 L914.8 269.0 L914.1 269.6 L913.4 269.0 L912.7 269.4 L912.0 269.8 L911.3 270.0 L910.6 269.8 L909.9 269.9 L909.2 269.1 L908.5 269.7 L907.8 269.3 L907.1 269.2 L906.4 269.5 L905.7 269.7 L905.0 270.0 L904.3 269.4 L903.6 269.1 L902.9 269.4 L902.2 269.2 L901.5 269.9 L900.8 270.0 L900.1 269.4 L899.4 269.1 L898.7 269.1 L898.0 269.3 L897.3 270.2 L896.6 269.3 L895.9 270.4 L895.2 271.1 L894.5 271.6 L893.8 273.7 L893.1 273.7 L892.4 270.3 L891.7 271.3 L891.0 271.7 L890.3 271.5 L889.6 271.7 L888.9 272.6 L888.2 271.9 L887.5 272.3 L886.8 272.1 L886.1 273.4 L885.4 274.5 L884.7 275.2 L884.0 275.2 L883.3 273.5 L882.6 274.3 L881.9 272.6 L881.2 277.1 L880.5 275.7 L879.8 278.8 L879.1 279.5 L878.4 279.2 L877.7 283.0 L877.0 289.0 L876.3 289.0 L875.6 278.6 L874.9 269.5 L874.2 269.4 L873.5 269.6 L872.8 269.0 L872.1 269.4 L871.4 269.9 L870.7 269.6 L870.0 269.6 L869.3 269.3 L868.6 269.9 L867.9 269.2 L867.2 269.7 L866.5 269.3 L865.8 269.7 L865.1 269.0 L864.4 270.2 L863.7 269.6 L863.0 270.3 L862.3 271.0 L861.6 272.2 L860.9 274.0 L860.2 275.0 L859.5 278.1 L858.8 276.5 L858.1 269.2 L857.4 269.2 L856.7 270.0 L856.0 270.0 L855.3 270.0 L854.6 271.7 L853.9 273.7 L853.2 273.7 L852.5 269.6 L851.8 269.5 L851.1 269.5 L850.4 269.6 L849.7 270.7 L849.0 273.1 L848.3 273.1 L847.6 269.7 L846.9 269.1 L846.2 269.9 L845.5 269.2 L844.8 269.1 L844.1 269.2 L843.4 270.0 L842.7 271.0 L842.0 273.7 L841.3 273.7 L840.6 271.0 L839.9 269.6 L839.2 270.9 L838.5 270.4 L837.8 272.9 L837.1 271.9 L836.4 276.1 L835.7 273.3 L835.0 269.6 L834.3 269.7 L833.6 269.9 L832.9 270.3 L832.2 271.2 L831.5 271.7 L830.8 273.7 L830.1 273.7 L829.4 269.4 L828.7 270.2 L828.0 270.1 L827.3 270.5 L826.6 273.2 L825.9 276.6 L825.2 276.6 L824.5 270.4 L823.8 268.9 L823.1 269.8 L822.4 269.9 L821.7 269.2 L821.0 269.1 L820.3 269.5 L819.6 269.5 L818.9 269.8 L818.2 269.7 L817.5 269.8 L816.8 269.8 L816.1 269.0 L815.4 269.8 L814.7 269.7 L814.0 269.0 L813.3 269.8 L812.6 269.6 L811.9 269.6 L811.2 269.8 L810.5 269.6 L809.8 269.1 L809.1 269.0 L808.4 269.9 L807.7 269.2 L807.0 268.9 L806.3 269.2 L805.6 270.4 L804.9 270.0 L804.2 271.2 L803.5 273.1 L802.8 271.6 L802.1 269.2 L801.4 269.3 L800.7 269.4 L800.0 269.8 L799.3 270.1 L798.6 270.4 L797.9 270.2 L797.2 271.5 L796.5 273.7 L795.8 272.3 L795.1 269.9 L794.4 270.0 L793.7 269.7 L793.0 270.6 L792.3 270.9 L791.6 271.1 L790.9 271.0 L790.2 272.7 L789.5 275.2 L788.8 271.9 L788.1 270.0 L787.4 269.6 L786.7 269.5 L786.0 269.6 L785.3 269.3 L784.6 270.4 L783.9 270.3 L783.2 271.5 L782.5 271.4 L781.8 274.3 L781.1 274.3 L780.4 269.2 L779.7 268.9 L779.0 269.4 L778.3 270.1 L777.6 270.3 L776.9 270.4 L776.2 270.3 L775.5 273.7 L774.8 271.8 L774.1 269.8 L773.4 270.4 L772.7 270.4 L772.0 269.7 L771.3 272.0 L770.6 272.8 L769.9 275.2 L769.2 275.2 L768.5 270.9 L767.8 270.5 L767.1 270.3 L766.4 270.0 L765.7 270.5 L765.0 271.4 L764.3 271.8 L763.6 272.3 L762.9 272.2 L762.2 271.9 L761.5 272.8 L760.8 272.9 L760.1 273.5 L759.4 273.5 L758.7 274.4 L758.0 274.4 L757.3 275.2 L756.6 277.1 L755.9 277.1 L755.2 279.5 L754.5 276.9 L753.8 285.5 L753.1 285.5 L752.4 271.6 L751.7 269.7 L751.0 269.9 L750.3 269.9 L749.6 269.4 L748.9 269.9 L748.2 269.3 L747.5 269.9 L746.8 269.5 L746.1 269.0 L745.4 270.2 L744.7 269.7 L744.0 271.0 L743.3 270.3 L742.6 270.1 L741.9 271.0 L741.2 271.9 L740.5 274.4 L739.8 273.7 L739.1 276.3 L738.4 279.6 L737.7 274.7 L737.0 271.7 L736.3 273.4 L735.6 273.1 L734.9 273.0 L734.2 272.2 L733.5 276.2 L732.8 274.4 L732.1 273.6 L731.4 274.8 L730.7 278.9 L730.0 278.2 L729.3 281.6 L728.6 282.8 L727.9 289.9 L727.2 289.9 L726.5 278.2 L725.8 269.9 L725.1 269.5 L724.4 269.2 L723.7 270.7 L723.0 270.6 L722.3 271.3 L721.6 273.7 L720.9 272.5 L720.2 270.0 L719.5 269.8 L718.8 270.3 L718.1 270.8 L717.4 270.4 L716.7 271.0 L716.0 271.7 L715.3 271.2 L714.6 272.6 L713.9 271.3 L713.2 272.7 L712.5 271.7 L711.8 273.6 L711.1 275.9 L710.4 273.5 L709.7 276.3 L709.0 282.5 L708.3 282.5 L707.6 275.1 L706.9 274.6 L706.2 276.2 L705.5 277.5 L704.8 273.3 L704.1 273.7 L703.4 279.5 L702.7 275.5 L702.0 279.0 L701.3 277.5 L700.6 286.2 L699.9 292.7 L699.2 292.7 L698.5 276.4 L697.8 269.4 L697.1 270.0 L696.4 270.5 L695.7 270.7 L695.0 271.8 L694.3 271.2 L693.6 273.3 L692.9 276.6 L692.2 276.6 L691.5 270.6 L690.8 270.2 L690.1 271.2 L689.4 271.5 L688.7 272.9 L688.0 271.6 L687.3 272.2 L686.6 278.1 L685.9 277.5 L685.2 269.2 L684.5 269.0 L683.8 269.7 L683.1 269.5 L682.4 269.0 L681.7 269.8 L681.0 269.3 L680.3 269.8 L679.6 269.1 L678.9 269.8 L678.2 269.4 L677.5 269.0 L676.8 269.4 L676.1 269.9 L675.4 269.4 L674.7 270.4 L674.0 269.9 L673.3 271.0 L672.6 272.0 L671.9 270.2 L671.2 272.1 L670.5 271.7 L669.8 273.9 L669.1 272.7 L668.4 274.2 L667.7 275.2 L667.0 277.1 L666.3 279.1 L665.6 282.5 L664.9 278.2 L664.2 270.7 L663.5 269.0 L662.8 269.7 L662.1 269.9 L661.4 269.6 L660.7 269.1 L660.0 269.2 L659.3 269.0 L658.6 270.0 L657.9 269.7 L657.2 269.9 L656.5 269.7 L655.8 269.9 L655.1 269.3 L654.4 270.3 L653.7 270.4 L653.0 270.9 L652.3 270.2 L651.6 270.4 L650.9 272.6 L650.2 270.8 L649.5 271.7 L648.8 272.7 L648.1 275.3 L647.4 279.0 L646.7 274.3 L646.0 269.1 L645.3 269.6 L644.6 268.9 L643.9 269.4 L643.2 269.2 L642.5 269.9 L641.8 268.9 L641.1 269.1 L640.4 269.0 L639.7 269.4 L639.0 270.0 L638.3 270.2 L637.6 270.5 L636.9 271.4 L636.2 272.9 L635.5 272.7 L634.8 271.6 L634.1 273.1 L633.4 279.6 L632.7 275.1 L632.0 269.9 L631.3 269.8 L630.6 269.1 L629.9 269.9 L629.2 269.0 L628.5 269.8 L627.8 269.5 L627.1 269.6 L626.4 270.0 L625.7 270.1 L625.0 272.1 L624.3 271.3 L623.6 271.1 L622.9 274.5 L622.2 272.2 L621.5 279.6 L620.8 273.3 L620.1 270.2 L619.4 270.7 L618.7 269.5 L618.0 271.7 L617.3 271.4 L616.6 273.0 L615.9 271.6 L615.2 274.6 L614.5 276.1 L613.8 279.6 L613.1 279.6 L612.4 272.3 L611.7 272.7 L611.0 278.4 L610.3 279.1 L609.6 280.9 L608.9 276.6 L608.2 287.7 L607.5 292.7 L606.8 282.2 L606.1 271.1 L605.4 271.4 L604.7 270.1 L604.0 272.9 L603.3 273.0 L602.6 271.6 L601.9 278.1 L601.2 278.1 L600.5 272.9 L599.8 272.2 L599.1 270.6 L598.4 272.7 L597.7 272.9 L597.0 272.5 L596.3 276.8 L595.6 281.1 L594.9 280.3 L594.2 269.8 L593.5 270.3 L592.8 271.4 L592.1 272.8 L591.4 272.6 L590.7 273.3 L590.0 274.3 L589.3 272.3 L588.6 279.6 L587.9 276.6 L587.2 270.4 L586.5 269.9 L585.8 271.4 L585.1 270.6 L584.4 273.4 L583.7 273.5 L583.0 272.1 L582.3 273.0 L581.6 276.9 L580.9 281.1 L580.2 281.1 L579.5 274.5 L578.8 276.3 L578.1 274.5 L577.4 278.9 L576.7 278.9 L576.0 282.6 L575.3 287.6 L574.6 292.7 L573.9 283.8 L573.2 274.4 L572.5 276.6 L571.8 278.1 L571.1 277.6 L570.4 282.3 L569.7 283.5 L569.0 292.7 L568.3 292.7 L567.6 277.2 L566.9 272.3 L566.2 273.1 L565.5 274.8 L564.8 272.6 L564.1 272.6 L563.4 274.7 L562.7 279.9 L562.0 285.5 L561.3 285.5 L560.6 275.2 L559.9 273.0 L559.2 272.4 L558.5 273.5 L557.8 275.8 L557.1 277.7 L556.4 274.1 L555.7 275.2 L555.0 287.0 L554.3 287.0 L553.6 274.6 L552.9 276.9 L552.2 274.4 L551.5 274.8 L550.8 278.3 L550.1 284.9 L549.4 288.2 L548.7 292.7 L548.0 290.6 L547.3 274.3 L546.6 269.8 L545.9 269.9 L545.2 270.3 L544.5 271.2 L543.8 271.0 L543.1 271.9 L542.4 271.5 L541.7 273.2 L541.0 272.5 L540.3 272.0 L539.6 273.8 L538.9 279.6 L538.2 279.6 L537.5 271.3 L536.8 270.1 L536.1 272.6 L535.4 273.3 L534.7 273.7 L534.0 272.3 L533.3 273.0 L532.6 275.0 L531.9 281.1 L531.2 281.1 L530.5 273.1 L529.8 276.1 L529.1 274.5 L528.4 278.0 L527.7 279.3 L527.0 279.2 L526.3 281.1 L525.6 279.7 L524.9 292.7 L524.2 292.7 L523.5 275.7 L522.8 276.3 L522.1 274.2 L521.4 278.8 L520.7 279.8 L520.0 280.1 L519.3 280.2 L518.6 289.9 L517.9 284.7 L517.2 274.6 L516.5 274.9 L515.8 274.9 L515.1 274.7 L514.4 279.0 L513.7 277.1 L513.0 280.9 L512.3 278.5 L511.6 291.4 L510.9 284.3 L510.2 276.7 L509.5 273.4 L508.8 277.0 L508.1 279.8 L507.4 278.1 L506.7 284.1 L506.0 286.3 L505.3 289.8 L504.6 292.7 L503.9 293.4 L503.2 272.2 L502.5 271.2 L501.8 271.4 L501.1 271.3 L500.4 271.9 L499.7 272.6 L499.0 272.3 L498.3 273.0 L497.6 273.4 L496.9 271.0 L496.2 273.2 L495.5 274.4 L494.8 273.7 L494.1 275.1 L493.4 274.0 L492.7 275.6 L492.0 275.8 L491.3 276.1 L490.6 276.3 L489.9 276.9 L489.2 277.0 L488.5 277.3 L487.8 276.1 L487.1 277.4 L486.4 279.6 L485.7 277.9 L485.0 278.0 L484.3 277.1 L483.6 278.4 L482.9 279.3 L482.2 282.2 L481.5 284.1 L480.8 282.1 L480.1 284.0 L479.4 279.7 L478.7 292.7 L478.0 285.5 L477.3 274.4 L476.6 269.9 L475.9 269.1 L475.2 269.0 L474.5 270.0 L473.8 270.1 L473.1 270.0 L472.4 271.0 L471.7 269.8 L471.0 271.3 L470.3 271.6 L469.6 272.0 L468.9 272.8 L468.2 273.3 L467.5 272.8 L466.8 273.9 L466.1 276.3 L465.4 281.1 L464.7 272.8 L464.0 276.0 L463.3 278.3 L462.6 275.8 L461.9 283.8 L461.2 285.1 L460.5 292.0 L459.8 287.0 L459.1 272.9 L458.4 271.7 L457.7 272.3 L457.0 275.0 L456.3 273.5 L455.6 277.1 L454.9 277.6 L454.2 275.1 L453.5 276.8 L452.8 281.4 L452.1 284.2 L451.4 291.4 L450.7 285.0 L450.0 269.7 L449.3 270.2 L448.6 270.5 L447.9 270.6 L447.2 272.6 L446.5 272.8 L445.8 273.4 L445.1 273.7 L444.4 277.8 L443.7 282.5 L443.0 276.7 L442.3 271.6 L441.6 273.6 L440.9 272.8 L440.2 274.9 L439.5 277.0 L438.8 275.5 L438.1 276.2 L437.4 277.2 L436.7 288.4 L436.0 282.0 L435.3 278.7 L434.6 282.2 L433.9 277.6 L433.2 282.1 L432.5 292.7 L431.8 286.9 L431.1 276.6 L430.4 278.8 L429.7 281.9 L429.0 291.4 L428.3 291.4 L427.6 276.8 L426.9 281.3 L426.2 281.2 L425.5 278.9 L424.8 292.7 L424.1 292.7 L423.4 278.0 L422.7 274.1 L422.0 272.0 L421.3 274.0 L420.6 277.6 L419.9 274.3 L419.2 280.3 L418.5 287.0 L417.8 280.2 L417.1 269.1 L416.4 269.8 L415.7 269.4 L415.0 270.1 L414.3 271.5 L413.6 272.0 L412.9 273.4 L412.2 273.7 L411.5 272.3 L410.8 273.8 L410.1 273.3 L409.4 281.1 L408.7 275.1 L408.0 272.9 L407.3 272.1 L406.6 273.4 L405.9 273.0 L405.2 276.4 L404.5 275.1 L403.8 276.9 L403.1 276.4 L402.4 282.4 L401.7 288.4 L401.0 285.1 L400.3 278.9 L399.6 280.6 L398.9 282.5 L398.2 282.6 L397.5 292.7 L396.8 281.1 L396.1 273.6 L395.4 271.8 L394.7 275.9 L394.0 275.4 L393.3 278.9 L392.6 282.5 L391.9 276.2 L391.2 272.9 L390.5 273.5 L389.8 277.9 L389.1 279.6 L388.4 281.5 L387.7 283.2 L387.0 290.8 L386.3 290.8 L385.6 278.0 L384.9 269.0 L384.2 269.1 L383.5 269.6 L382.8 269.2 L382.1 269.7 L381.4 269.2 L380.7 270.1 L380.0 269.9 L379.3 271.0 L378.6 270.4 L377.9 270.7 L377.2 271.8 L376.5 271.5 L375.8 272.5 L375.1 272.2 L374.4 273.9 L373.7 273.8 L373.0 273.6 L372.3 275.0 L371.6 275.5 L370.9 274.8 L370.2 277.4 L369.5 277.4 L368.8 275.9 L368.1 283.3 L367.4 287.3 L366.7 282.1 L366.0 270.7 L365.3 270.9 L364.6 271.7 L363.9 270.5 L363.2 272.8 L362.5 271.2 L361.8 271.5 L361.1 271.6 L360.4 274.1 L359.7 272.3 L359.0 272.3 L358.3 275.3 L357.6 273.0 L356.9 281.1 L356.2 281.1 L355.5 274.5 L354.8 276.0 L354.1 274.4 L353.4 276.4 L352.7 281.3 L352.0 281.2 L351.3 284.1 L350.6 284.1 L349.9 292.7 L349.2 292.7 L348.5 280.1 L347.8 270.1 L347.1 270.5 L346.4 271.2 L345.7 275.1 L345.0 275.5 L344.3 277.0 L343.6 279.7 L342.9 287.3 L342.2 287.3 L341.5 275.2 L340.8 269.8 L340.1 269.1 L339.4 269.8 L338.7 269.9 L338.0 269.8 L337.3 269.9 L336.6 271.2 L335.9 271.3 L335.2 272.3 L334.5 273.8 L333.8 276.6 L333.1 276.6 L332.4 271.3 L331.7 269.2 L331.0 270.0 L330.3 269.8 L329.6 270.5 L328.9 270.5 L328.2 271.0 L327.5 271.0 L326.8 270.1 L326.1 272.7 L325.4 271.5 L324.7 273.3 L324.0 273.6 L323.3 275.8 L322.6 274.7 L321.9 281.1 L321.2 281.1 L320.5 273.3 L319.8 270.0 L319.1 270.2 L318.4 270.5 L317.7 270.2 L317.0 270.6 L316.3 271.1 L315.6 271.9 L314.9 270.7 L314.2 271.6 L313.5 276.1 L312.8 273.7 L312.1 270.5 L311.4 271.5 L310.7 269.2 L310.0 269.5 L309.3 271.0 L308.6 270.6 L307.9 271.4 L307.2 270.2 L306.5 271.9 L305.8 273.7 L305.1 273.7 L304.4 270.2 L303.7 269.4 L303.0 269.8 L302.3 269.5 L301.6 268.9 L300.9 269.9 L300.2 268.9 L299.5 269.0 L298.8 269.0 L298.1 269.4 L297.4 269.7 L296.7 269.8 L296.0 270.0 L295.3 270.8 L294.6 272.2 L293.9 270.1 L293.2 269.2 L292.5 269.0 L291.8 269.1 L291.1 269.6 L290.4 270.0 L289.7 269.4 L289.0 269.9 L288.3 269.2 L287.6 269.1 L286.9 269.9 L286.2 269.6 L285.5 269.6 L284.8 269.8 L284.1 269.1 L283.4 269.9 L282.7 269.4 L282.0 269.5Z" fill="#2b2e35"/>
<rect x="282" y="298.5" width="712" height="54" rx="3" fill="#e6ebf2"/>
<path d="M282.0 324.2 L282.7 324.3 L283.4 324.3 L284.1 324.1 L284.8 324.1 L285.5 324.1 L286.2 324.3 L286.9 324.1 L287.6 324.3 L288.3 324.3 L289.0 324.3 L289.7 324.3 L290.4 324.1 L291.1 324.2 L291.8 324.1 L292.5 324.3 L293.2 324.3 L293.9 322.6 L294.6 322.3 L295.3 323.4 L296.0 323.8 L296.7 324.3 L297.4 324.2 L298.1 324.3 L298.8 324.3 L299.5 324.3 L300.2 324.3 L300.9 324.1 L301.6 324.1 L302.3 324.3 L303.0 324.3 L303.7 324.3 L304.4 324.1 L305.1 321.3 L305.8 321.3 L306.5 322.5 L307.2 323.6 L307.9 323.8 L308.6 323.7 L309.3 322.9 L310.0 323.2 L310.7 323.5 L311.4 322.9 L312.1 323.7 L312.8 320.8 L313.5 319.7 L314.2 322.7 L314.9 322.0 L315.6 322.6 L316.3 323.8 L317.0 323.0 L317.7 323.3 L318.4 323.6 L319.1 323.0 L319.8 323.9 L320.5 322.9 L321.2 316.3 L321.9 316.3 L322.6 321.8 L323.3 322.2 L324.0 321.3 L324.7 321.3 L325.4 321.7 L326.1 322.2 L326.8 322.7 L327.5 322.7 L328.2 322.9 L328.9 323.3 L329.6 323.6 L330.3 323.9 L331.0 324.1 L331.7 324.3 L332.4 323.3 L333.1 319.3 L333.8 319.3 L334.5 322.8 L335.2 322.0 L335.9 323.1 L336.6 323.5 L337.3 323.8 L338.0 324.3 L338.7 324.1 L339.4 324.1 L340.1 324.3 L340.8 324.2 L341.5 321.1 L342.2 312.2 L342.9 312.2 L343.6 317.3 L344.3 319.0 L345.0 319.3 L345.7 320.7 L346.4 323.1 L347.1 323.4 L347.8 323.8 L348.5 317.2 L349.2 308.4 L349.9 308.4 L350.6 317.9 L351.3 317.5 L352.0 315.7 L352.7 320.3 L353.4 319.9 L354.1 318.0 L354.8 319.0 L355.5 321.8 L356.2 316.3 L356.9 316.3 L357.6 319.1 L358.3 322.1 L359.0 320.5 L359.7 322.9 L360.4 321.5 L361.1 321.3 L361.8 323.3 L362.5 322.5 L363.2 322.6 L363.9 323.4 L364.6 322.7 L365.3 322.9 L366.0 323.2 L366.7 316.3 L367.4 312.4 L368.1 317.6 L368.8 317.9 L369.5 319.1 L370.2 319.8 L370.9 320.1 L371.6 319.6 L372.3 320.3 L373.0 322.1 L373.7 321.4 L374.4 322.2 L375.1 321.6 L375.8 322.1 L376.5 323.2 L377.2 323.1 L377.9 323.8 L378.6 323.5 L379.3 323.6 L380.0 323.7 L380.7 323.9 L381.4 324.3 L382.1 324.3 L382.8 324.3 L383.5 324.3 L384.2 324.2 L384.9 324.2 L385.6 316.4 L386.3 310.7 L387.0 310.7 L387.7 318.3 L388.4 320.4 L389.1 318.3 L389.8 319.7 L390.5 322.3 L391.2 320.3 L391.9 318.5 L392.6 316.1 L393.3 320.7 L394.0 320.8 L394.7 320.2 L395.4 322.0 L396.1 321.4 L396.8 316.9 L397.5 309.2 L398.2 313.2 L398.9 315.8 L399.6 317.7 L400.3 320.4 L401.0 312.8 L401.7 312.6 L402.4 316.3 L403.1 319.8 L403.8 318.5 L404.5 320.9 L405.2 320.1 L405.9 320.6 L406.6 321.8 L407.3 322.4 L408.0 322.3 L408.7 320.8 L409.4 317.3 L410.1 319.2 L410.8 320.7 L411.5 322.4 L412.2 322.3 L412.9 322.4 L413.6 322.7 L414.3 323.7 L415.0 323.3 L415.7 324.3 L416.4 324.3 L417.1 324.3 L417.8 317.4 L418.5 314.0 L419.2 317.9 L419.9 320.4 L420.6 320.1 L421.3 320.1 L422.0 320.8 L422.7 321.7 L423.4 319.1 L424.1 309.9 L424.8 309.9 L425.5 315.7 L426.2 316.6 L426.9 318.2 L427.6 320.9 L428.3 311.7 L429.0 311.8 L429.7 316.3 L430.4 319.1 L431.1 319.1 L431.8 312.8 L432.5 310.2 L433.2 314.1 L433.9 316.8 L434.6 319.2 L435.3 320.7 L436.0 317.2 L436.7 313.7 L437.4 321.1 L438.1 320.6 L438.8 319.3 L439.5 322.4 L440.2 322.3 L440.9 321.6 L441.6 322.6 L442.3 323.5 L443.0 319.0 L443.7 317.2 L444.4 320.1 L445.1 320.8 L445.8 321.5 L446.5 322.8 L447.2 323.3 L447.9 323.5 L448.6 324.1 L449.3 324.1 L450.0 324.3 L450.7 319.2 L451.4 312.5 L452.1 318.7 L452.8 319.7 L453.5 319.4 L454.2 320.1 L454.9 321.6 L455.6 321.7 L456.3 321.0 L457.0 322.7 L457.7 322.6 L458.4 322.2 L459.1 323.4 L459.8 317.9 L460.5 312.5 L461.2 317.4 L461.9 320.6 L462.6 321.6 L463.3 319.0 L464.0 321.9 L464.7 321.2 L465.4 318.4 L466.1 320.3 L466.8 320.9 L467.5 323.2 L468.2 323.2 L468.9 323.5 L469.6 322.8 L470.3 323.4 L471.0 323.2 L471.7 323.7 L472.4 323.7 L473.1 324.0 L473.8 324.0 L474.5 324.3 L475.2 324.3 L475.9 324.3 L476.6 324.3 L477.3 323.1 L478.0 312.7 L478.7 311.3 L479.4 314.8 L480.1 316.7 L480.8 317.3 L481.5 319.0 L482.2 318.9 L482.9 321.3 L483.6 320.5 L484.3 321.9 L485.0 321.2 L485.7 321.4 L486.4 319.4 L487.1 320.4 L487.8 322.5 L488.5 321.2 L489.2 321.0 L489.9 322.9 L490.6 322.1 L491.3 322.0 L492.0 321.4 L492.7 321.6 L493.4 322.3 L494.1 323.3 L494.8 322.5 L495.5 322.2 L496.2 322.6 L496.9 322.6 L497.6 323.2 L498.3 323.6 L499.0 323.2 L499.7 323.3 L500.4 323.1 L501.1 324.2 L501.8 323.8 L502.5 324.2 L503.2 322.6 L503.9 314.0 L504.6 310.9 L505.3 319.1 L506.0 316.2 L506.7 320.8 L507.4 320.0 L508.1 320.0 L508.8 321.9 L509.5 322.8 L510.2 321.0 L510.9 316.8 L511.6 313.6 L512.3 319.1 L513.0 319.2 L513.7 318.8 L514.4 320.0 L515.1 321.7 L515.8 321.0 L516.5 322.4 L517.2 321.8 L517.9 317.3 L518.6 314.3 L519.3 319.2 L520.0 319.0 L520.7 322.1 L521.4 322.2 L522.1 320.9 L522.8 323.1 L523.5 319.6 L524.2 312.9 L524.9 312.9 L525.6 319.2 L526.3 318.4 L527.0 319.6 L527.7 321.3 L528.4 322.1 L529.1 321.7 L529.8 323.2 L530.5 323.1 L531.2 318.7 L531.9 318.7 L532.6 321.6 L533.3 321.6 L534.0 322.9 L534.7 322.4 L535.4 322.8 L536.1 323.0 L536.8 323.2 L537.5 323.6 L538.2 319.5 L538.9 319.5 L539.6 321.5 L540.3 323.0 L541.0 323.1 L541.7 323.0 L542.4 323.0 L543.1 323.4 L543.8 324.3 L544.5 324.3 L545.2 324.0 L545.9 324.3 L546.6 324.2 L547.3 321.6 L548.0 311.9 L548.7 311.5 L549.4 316.8 L550.1 319.7 L550.8 317.8 L551.5 321.6 L552.2 321.4 L552.9 320.7 L553.6 322.2 L554.3 315.9 L555.0 315.9 L555.7 318.9 L556.4 322.2 L557.1 322.7 L557.8 321.3 L558.5 323.3 L559.2 322.4 L559.9 322.8 L560.6 322.4 L561.3 316.6 L562.0 316.6 L562.7 320.9 L563.4 320.8 L564.1 322.4 L564.8 321.6 L565.5 322.1 L566.2 322.2 L566.9 322.8 L567.6 320.9 L568.3 313.0 L569.0 313.0 L569.7 319.7 L570.4 318.8 L571.1 320.9 L571.8 321.9 L572.5 322.1 L573.2 323.0 L573.9 316.1 L574.6 312.3 L575.3 316.5 L576.0 317.6 L576.7 320.1 L577.4 320.2 L578.1 321.2 L578.8 322.5 L579.5 323.3 L580.2 318.8 L580.9 318.8 L581.6 320.8 L582.3 321.5 L583.0 323.5 L583.7 323.7 L584.4 323.7 L585.1 323.1 L585.8 324.2 L586.5 323.9 L587.2 323.7 L587.9 320.2 L588.6 319.5 L589.3 322.2 L590.0 321.6 L590.7 323.1 L591.4 322.8 L592.1 323.7 L592.8 323.1 L593.5 323.6 L594.2 324.0 L594.9 319.6 L595.6 318.8 L596.3 321.1 L597.0 321.7 L597.7 322.3 L598.4 323.6 L599.1 323.1 L599.8 323.8 L600.5 322.7 L601.2 320.3 L601.9 320.3 L602.6 322.5 L603.3 322.4 L604.0 323.5 L604.7 323.2 L605.4 323.7 L606.1 323.7 L606.8 317.1 L607.5 312.7 L608.2 319.4 L608.9 317.8 L609.6 321.6 L610.3 320.5 L611.0 322.5 L611.7 322.8 L612.4 323.0 L613.1 319.6 L613.8 319.6 L614.5 322.9 L615.2 322.1 L615.9 323.0 L616.6 322.9 L617.3 323.8 L618.0 323.4 L618.7 324.2 L619.4 324.3 L620.1 324.3 L620.8 321.9 L621.5 319.6 L622.2 321.8 L622.9 322.4 L623.6 322.4 L624.3 323.4 L625.0 324.0 L625.7 323.9 L626.4 324.2 L627.1 324.2 L627.8 324.3 L628.5 324.3 L629.2 324.3 L629.9 324.3 L630.6 324.3 L631.3 324.3 L632.0 324.3 L632.7 322.9 L633.4 319.8 L634.1 321.4 L634.8 322.5 L635.5 323.7 L636.2 323.8 L636.9 323.3 L637.6 324.2 L638.3 324.3 L639.0 324.3 L639.7 324.3 L640.4 324.3 L641.1 324.3 L641.8 324.3 L642.5 324.3 L643.2 324.3 L643.9 324.3 L644.6 324.3 L645.3 324.3 L646.0 324.3 L646.7 322.5 L647.4 320.2 L648.1 322.4 L648.8 323.2 L649.5 323.8 L650.2 323.1 L650.9 323.4 L651.6 324.0 L652.3 324.2 L653.0 324.2 L653.7 324.2 L654.4 324.2 L655.1 324.2 L655.8 324.3 L656.5 324.3 L657.2 324.3 L657.9 324.3 L658.6 324.3 L659.3 324.3 L660.0 324.3 L660.7 324.3 L661.4 324.3 L662.1 324.3 L662.8 324.3 L663.5 324.3 L664.2 324.3 L664.9 320.3 L665.6 318.9 L666.3 321.6 L667.0 322.3 L667.7 323.3 L668.4 322.3 L669.1 322.4 L669.8 323.1 L670.5 323.0 L671.2 323.2 L671.9 324.3 L672.6 323.6 L673.3 324.0 L674.0 324.3 L674.7 324.2 L675.4 324.2 L676.1 324.3 L676.8 324.3 L677.5 324.3 L678.2 324.3 L678.9 324.3 L679.6 324.3 L680.3 324.3 L681.0 324.3 L681.7 324.3 L682.4 324.3 L683.1 324.3 L683.8 324.3 L684.5 324.3 L685.2 324.3 L685.9 321.7 L686.6 321.1 L687.3 323.3 L688.0 323.9 L688.7 323.4 L689.4 324.0 L690.1 324.3 L690.8 324.3 L691.5 324.0 L692.2 321.8 L692.9 321.8 L693.6 323.1 L694.3 323.4 L695.0 323.8 L695.7 324.0 L696.4 324.3 L697.1 324.3 L697.8 324.3 L698.5 321.8 L699.2 315.5 L699.9 315.5 L700.6 320.9 L701.3 319.1 L702.0 322.1 L702.7 320.2 L703.4 320.6 L704.1 322.6 L704.8 322.3 L705.5 322.5 L706.2 321.7 L706.9 323.1 L707.6 322.2 L708.3 319.6 L709.0 319.6 L709.7 321.8 L710.4 323.5 L711.1 323.4 L711.8 322.5 L712.5 323.2 L713.2 323.2 L713.9 323.6 L714.6 324.1 L715.3 324.2 L716.0 323.6 L716.7 324.3 L717.4 323.9 L718.1 324.2 L718.8 324.2 L719.5 324.3 L720.2 324.3 L720.9 323.4 L721.6 323.0 L722.3 323.7 L723.0 324.0 L723.7 324.3 L724.4 324.3 L725.1 324.3 L725.8 324.3 L726.5 322.8 L727.2 316.9 L727.9 316.9 L728.6 320.1 L729.3 320.3 L730.0 321.5 L730.7 322.4 L731.4 321.7 L732.1 321.7 L732.8 322.8 L733.5 322.1 L734.2 323.3 L734.9 322.5 L735.6 323.7 L736.3 322.8 L737.0 323.6 L737.7 322.3 L738.4 320.9 L739.1 322.6 L739.8 322.8 L740.5 324.0 L741.2 323.3 L741.9 323.5 L742.6 324.3 L743.3 324.3 L744.0 324.2 L744.7 324.3 L745.4 324.3 L746.1 324.3 L746.8 324.3 L747.5 324.3 L748.2 324.3 L748.9 324.3 L749.6 324.3 L750.3 324.3 L751.0 324.3 L751.7 324.3 L752.4 323.6 L753.1 318.8 L753.8 318.8 L754.5 321.0 L755.2 321.2 L755.9 322.9 L756.6 322.8 L757.3 322.7 L758.0 323.2 L758.7 323.4 L759.4 323.0 L760.1 323.8 L760.8 323.6 L761.5 323.3 L762.2 323.5 L762.9 324.3 L763.6 323.7 L764.3 324.1 L765.0 324.2 L765.7 324.3 L766.4 324.3 L767.1 324.3 L767.8 324.3 L768.5 324.0 L769.2 322.6 L769.9 322.6 L770.6 323.5 L771.3 324.0 L772.0 324.2 L772.7 324.2 L773.4 324.3 L774.1 324.3 L774.8 323.8 L775.5 323.2 L776.2 324.3 L776.9 324.3 L777.6 324.3 L778.3 324.3 L779.0 324.3 L779.7 324.3 L780.4 324.3 L781.1 323.0 L781.8 323.0 L782.5 324.0 L783.2 324.2 L783.9 324.2 L784.6 324.3 L785.3 324.3 L786.0 324.3 L786.7 324.3 L787.4 324.3 L788.1 324.3 L788.8 324.1 L789.5 322.7 L790.2 323.9 L790.9 323.7 L791.6 324.3 L792.3 324.1 L793.0 324.3 L793.7 324.3 L794.4 324.3 L795.1 324.3 L795.8 324.0 L796.5 323.2 L797.2 324.3 L797.9 324.1 L798.6 324.3 L799.3 324.3 L800.0 324.3 L800.7 324.3 L801.4 324.3 L802.1 324.3 L802.8 324.1 L803.5 323.5 L804.2 324.0 L804.9 324.3 L805.6 324.3 L806.3 324.3 L807.0 324.3 L807.7 324.3 L808.4 324.3 L809.1 324.3 L809.8 324.3 L810.5 324.3 L811.2 324.3 L811.9 324.3 L812.6 324.3 L813.3 324.3 L814.0 324.3 L814.7 324.3 L815.4 324.3 L816.1 324.3 L816.8 324.3 L817.5 324.3 L818.2 324.3 L818.9 324.3 L819.6 324.3 L820.3 324.3 L821.0 324.3 L821.7 324.3 L822.4 324.3 L823.1 324.3 L823.8 324.3 L824.5 324.3 L825.2 322.3 L825.9 322.3 L826.6 323.9 L827.3 324.2 L828.0 324.3 L828.7 324.3 L829.4 324.3 L830.1 323.3 L830.8 323.3 L831.5 324.3 L832.2 324.3 L832.9 324.3 L833.6 324.3 L834.3 324.3 L835.0 324.3 L835.7 323.4 L836.4 322.6 L837.1 324.0 L837.8 324.3 L838.5 323.9 L839.2 324.3 L839.9 324.3 L840.6 324.3 L841.3 323.4 L842.0 323.4 L842.7 324.1 L843.4 324.3 L844.1 324.3 L844.8 324.3 L845.5 324.3 L846.2 324.3 L846.9 324.3 L847.6 324.3 L848.3 323.6 L849.0 323.6 L849.7 324.3 L850.4 324.3 L851.1 324.3 L851.8 324.3 L852.5 324.3 L853.2 323.4 L853.9 323.4 L854.6 324.3 L855.3 324.3 L856.0 324.3 L856.7 324.3 L857.4 324.3 L858.1 324.3 L858.8 322.9 L859.5 321.9 L860.2 323.4 L860.9 323.3 L861.6 324.1 L862.3 324.0 L863.0 324.3 L863.7 324.3 L864.4 324.3 L865.1 324.3 L865.8 324.3 L866.5 324.3 L867.2 324.3 L867.9 324.3 L868.6 324.3 L869.3 324.3 L870.0 324.3 L870.7 324.3 L871.4 324.3 L872.1 324.3 L872.8 324.3 L873.5 324.3 L874.2 324.3 L874.9 324.3 L875.6 322.1 L876.3 318.4 L877.0 318.4 L877.7 322.2 L878.4 321.0 L879.1 322.7 L879.8 322.6 L880.5 323.4 L881.2 322.8 L881.9 322.5 L882.6 322.7 L883.3 323.1 L884.0 322.9 L884.7 322.9 L885.4 324.2 L886.1 323.3 L886.8 324.1 L887.5 324.0 L888.2 324.0 L888.9 323.7 L889.6 324.3 L890.3 324.3 L891.0 324.3 L891.7 324.3 L892.4 324.3 L893.1 323.4 L893.8 323.4 L894.5 324.0 L895.2 324.3 L895.9 324.3 L896.6 324.3 L897.3 324.3 L898.0 324.3 L898.7 324.3 L899.4 324.3 L900.1 324.3 L900.8 324.3 L901.5 324.3 L902.2 324.3 L902.9 324.3 L903.6 324.3 L904.3 324.3 L905.0 324.3 L905.7 324.3 L906.4 324.3 L907.1 324.3 L907.8 324.3 L908.5 324.3 L909.2 324.3 L909.9 324.3 L910.6 324.3 L911.3 324.3 L912.0 324.3 L912.7 324.3 L913.4 324.3 L914.1 324.3 L914.8 324.3 L915.5 324.3 L916.2 324.3 L916.9 324.3 L917.6 324.3 L918.3 324.3 L919.0 324.3 L919.7 322.0 L920.4 320.4 L921.1 321.6 L921.8 322.3 L922.5 322.5 L923.2 323.8 L923.9 323.1 L924.6 323.5 L925.3 323.5 L926.0 323.6 L926.7 324.2 L927.4 323.9 L928.1 321.2 L928.8 321.2 L929.5 323.8 L930.2 322.8 L930.9 324.1 L931.6 324.0 L932.3 324.3 L933.0 324.3 L933.7 324.0 L934.4 324.3 L935.1 321.4 L935.8 321.4 L936.5 323.2 L937.2 323.0 L937.9 323.9 L938.6 323.5 L939.3 324.1 L940.0 324.0 L940.7 324.3 L941.4 324.3 L942.1 324.3 L942.8 324.3 L943.5 324.3 L944.2 324.3 L944.9 323.7 L945.6 322.4 L946.3 324.1 L947.0 324.3 L947.7 323.9 L948.4 324.2 L949.1 324.3 L949.8 323.0 L950.5 322.6 L951.2 323.3 L951.9 324.3 L952.6 324.1 L953.3 324.3 L954.0 324.3 L954.7 324.3 L955.4 324.3 L956.1 324.3 L956.8 323.2 L957.5 320.4 L958.2 321.9 L958.9 322.1 L959.6 323.4 L960.3 322.9 L961.0 323.7 L961.7 324.0 L962.4 324.3 L963.1 323.8 L963.8 324.2 L964.5 324.2 L965.2 324.3 L965.9 324.3 L966.6 324.3 L967.3 324.3 L968.0 324.3 L968.7 320.1 L969.4 316.9 L970.1 319.6 L970.8 321.5 L971.5 320.5 L972.2 321.4 L972.9 322.6 L973.6 322.8 L974.3 321.6 L975.0 321.8 L975.7 321.8 L976.4 323.1 L977.1 323.0 L977.8 323.0 L978.5 322.7 L979.2 324.0 L979.9 324.1 L980.6 324.0 L981.3 324.1 L982.0 322.8 L982.7 322.8 L983.4 323.9 L984.1 324.2 L984.8 324.2 L985.5 324.3 L986.2 324.3 L986.9 324.3 L987.6 324.3 L988.3 324.3 L989.0 324.3 L989.7 324.3 L990.4 324.3 L991.1 324.3 L991.8 324.3 L992.5 324.3 L992.5 326.3 L991.8 326.3 L991.1 326.3 L990.4 326.3 L989.7 326.3 L989.0 326.3 L988.3 326.3 L987.6 326.3 L986.9 326.3 L986.2 326.3 L985.5 326.4 L984.8 326.4 L984.1 326.7 L983.4 326.3 L982.7 327.7 L982.0 327.7 L981.3 327.3 L980.6 326.5 L979.9 327.0 L979.2 326.9 L978.5 327.8 L977.8 327.5 L977.1 328.2 L976.4 328.0 L975.7 328.7 L975.0 328.7 L974.3 328.3 L973.6 327.7 L972.9 327.7 L972.2 327.7 L971.5 329.9 L970.8 330.5 L970.1 328.9 L969.4 333.5 L968.7 330.4 L968.0 326.3 L967.3 326.3 L966.6 326.3 L965.9 326.3 L965.2 326.3 L964.5 326.5 L963.8 326.4 L963.1 326.8 L962.4 326.5 L961.7 327.2 L961.0 327.0 L960.3 327.1 L959.6 327.9 L958.9 328.4 L958.2 327.6 L957.5 330.1 L956.8 329.1 L956.1 326.3 L955.4 326.3 L954.7 326.3 L954.0 326.3 L953.3 326.3 L952.6 326.3 L951.9 326.3 L951.2 326.7 L950.5 328.0 L949.8 327.1 L949.1 326.3 L948.4 326.5 L947.7 326.3 L947.0 326.9 L946.3 327.0 L945.6 328.2 L944.9 326.9 L944.2 326.3 L943.5 326.3 L942.8 326.3 L942.1 326.3 L941.4 326.3 L940.7 326.3 L940.0 326.7 L939.3 326.6 L938.6 327.1 L937.9 327.3 L937.2 326.8 L936.5 328.0 L935.8 329.1 L935.1 329.1 L934.4 326.6 L933.7 326.7 L933.0 326.6 L932.3 327.0 L931.6 327.0 L930.9 327.5 L930.2 327.6 L929.5 326.9 L928.8 329.3 L928.1 329.3 L927.4 326.8 L926.7 326.8 L926.0 326.3 L925.3 326.3 L924.6 326.5 L923.9 327.1 L923.2 327.6 L922.5 327.9 L921.8 328.1 L921.1 327.5 L920.4 330.1 L919.7 328.8 L919.0 326.3 L918.3 326.3 L917.6 326.3 L916.9 326.3 L916.2 326.3 L915.5 326.3 L914.8 326.3 L914.1 326.3 L913.4 326.3 L912.7 326.3 L912.0 326.3 L911.3 326.3 L910.6 326.3 L909.9 326.3 L909.2 326.3 L908.5 326.3 L907.8 326.3 L907.1 326.3 L906.4 326.3 L905.7 326.3 L905.0 326.3 L904.3 326.3 L903.6 326.3 L902.9 326.3 L902.2 326.3 L901.5 326.3 L900.8 326.3 L900.1 326.3 L899.4 326.3 L898.7 326.3 L898.0 326.3 L897.3 326.3 L896.6 326.3 L895.9 326.3 L895.2 326.3 L894.5 326.6 L893.8 327.2 L893.1 327.2 L892.4 326.3 L891.7 326.3 L891.0 326.3 L890.3 326.5 L889.6 326.5 L888.9 326.3 L888.2 327.0 L887.5 326.9 L886.8 327.1 L886.1 326.8 L885.4 327.2 L884.7 327.7 L884.0 327.7 L883.3 327.3 L882.6 327.2 L881.9 328.1 L881.2 327.6 L880.5 327.9 L879.8 327.4 L879.1 329.0 L878.4 328.0 L877.7 329.4 L877.0 332.1 L876.3 332.1 L875.6 328.3 L874.9 326.3 L874.2 326.3 L873.5 326.3 L872.8 326.3 L872.1 326.3 L871.4 326.3 L870.7 326.3 L870.0 326.3 L869.3 326.3 L868.6 326.3 L867.9 326.3 L867.2 326.3 L866.5 326.3 L865.8 326.3 L865.1 326.3 L864.4 326.3 L863.7 326.3 L863.0 326.3 L862.3 326.4 L861.6 326.3 L860.9 326.4 L860.2 327.5 L859.5 328.6 L858.8 327.1 L858.1 326.3 L857.4 326.3 L856.7 326.3 L856.0 326.3 L855.3 326.3 L854.6 326.5 L853.9 327.2 L853.2 327.2 L852.5 326.3 L851.8 326.3 L851.1 326.3 L850.4 326.3 L849.7 326.3 L849.0 327.0 L848.3 327.0 L847.6 326.3 L846.9 326.3 L846.2 326.3 L845.5 326.3 L844.8 326.3 L844.1 326.3 L843.4 326.3 L842.7 326.3 L842.0 327.2 L841.3 327.2 L840.6 326.5 L839.9 326.3 L839.2 326.3 L838.5 326.5 L837.8 326.7 L837.1 326.9 L836.4 328.0 L835.7 326.8 L835.0 326.3 L834.3 326.3 L833.6 326.3 L832.9 326.3 L832.2 326.3 L831.5 326.4 L830.8 327.2 L830.1 327.3 L829.4 326.3 L828.7 326.3 L828.0 326.6 L827.3 326.5 L826.6 326.7 L825.9 328.2 L825.2 328.2 L824.5 326.4 L823.8 326.3 L823.1 326.3 L822.4 326.3 L821.7 326.3 L821.0 326.3 L820.3 326.3 L819.6 326.3 L818.9 326.3 L818.2 326.3 L817.5 326.3 L816.8 326.3 L816.1 326.3 L815.4 326.3 L814.7 326.3 L814.0 326.3 L813.3 326.3 L812.6 326.3 L811.9 326.3 L811.2 326.3 L810.5 326.3 L809.8 326.3 L809.1 326.3 L808.4 326.3 L807.7 326.3 L807.0 326.3 L806.3 326.3 L805.6 326.3 L804.9 326.3 L804.2 326.3 L803.5 327.1 L802.8 326.5 L802.1 326.3 L801.4 326.3 L800.7 326.3 L800.0 326.3 L799.3 326.3 L798.6 326.3 L797.9 326.3 L797.2 326.3 L796.5 327.3 L795.8 326.4 L795.1 326.3 L794.4 326.3 L793.7 326.3 L793.0 326.3 L792.3 326.5 L791.6 326.6 L790.9 326.3 L790.2 327.2 L789.5 327.8 L788.8 326.7 L788.1 326.3 L787.4 326.3 L786.7 326.3 L786.0 326.3 L785.3 326.3 L784.6 326.3 L783.9 326.3 L783.2 326.5 L782.5 326.7 L781.8 327.6 L781.1 327.6 L780.4 326.3 L779.7 326.3 L779.0 326.3 L778.3 326.3 L777.6 326.3 L776.9 326.3 L776.2 326.4 L775.5 327.4 L774.8 326.9 L774.1 326.3 L773.4 326.3 L772.7 326.3 L772.0 326.5 L771.3 326.4 L770.6 326.8 L769.9 327.9 L769.2 327.9 L768.5 326.3 L767.8 326.3 L767.1 326.3 L766.4 326.3 L765.7 326.3 L765.0 326.3 L764.3 326.3 L763.6 326.5 L762.9 326.7 L762.2 326.5 L761.5 326.9 L760.8 326.4 L760.1 327.3 L759.4 327.1 L758.7 326.8 L758.0 327.7 L757.3 327.9 L756.6 328.4 L755.9 327.9 L755.2 328.8 L754.5 328.8 L753.8 331.7 L753.1 331.7 L752.4 327.1 L751.7 326.3 L751.0 326.3 L750.3 326.3 L749.6 326.3 L748.9 326.3 L748.2 326.3 L747.5 326.3 L746.8 326.3 L746.1 326.3 L745.4 326.3 L744.7 326.3 L744.0 326.3 L743.3 326.4 L742.6 326.3 L741.9 326.9 L741.2 326.4 L740.5 326.9 L739.8 328.0 L739.1 328.5 L738.4 329.6 L737.7 328.3 L737.0 326.8 L736.3 327.6 L735.6 327.9 L734.9 327.7 L734.2 327.7 L733.5 328.1 L732.8 327.6 L732.1 327.6 L731.4 328.9 L730.7 328.5 L730.0 328.5 L729.3 329.7 L728.6 328.8 L727.9 333.5 L727.2 333.5 L726.5 329.6 L725.8 326.3 L725.1 326.3 L724.4 326.3 L723.7 326.3 L723.0 326.3 L722.3 326.5 L721.6 327.5 L720.9 327.2 L720.2 326.3 L719.5 326.3 L718.8 326.3 L718.1 326.3 L717.4 326.5 L716.7 326.3 L716.0 326.9 L715.3 327.1 L714.6 327.3 L713.9 327.3 L713.2 326.9 L712.5 327.0 L711.8 327.7 L711.1 327.6 L710.4 328.1 L709.7 328.8 L709.0 330.9 L708.3 330.9 L707.6 328.3 L706.9 328.5 L706.2 328.9 L705.5 328.8 L704.8 327.8 L704.1 328.1 L703.4 330.1 L702.7 330.2 L702.0 328.4 L701.3 329.0 L700.6 329.4 L699.9 334.9 L699.2 334.9 L698.5 328.7 L697.8 326.3 L697.1 326.3 L696.4 326.4 L695.7 326.3 L695.0 326.9 L694.3 326.4 L693.6 327.0 L692.9 328.8 L692.2 328.8 L691.5 326.4 L690.8 326.3 L690.1 326.3 L689.4 326.5 L688.7 326.5 L688.0 327.5 L687.3 327.9 L686.6 329.4 L685.9 328.9 L685.2 326.3 L684.5 326.3 L683.8 326.3 L683.1 326.3 L682.4 326.3 L681.7 326.3 L681.0 326.3 L680.3 326.3 L679.6 326.3 L678.9 326.3 L678.2 326.3 L677.5 326.3 L676.8 326.3 L676.1 326.3 L675.4 326.3 L674.7 326.5 L674.0 326.7 L673.3 326.4 L672.6 326.6 L671.9 327.2 L671.2 326.9 L670.5 326.8 L669.8 327.7 L669.1 327.6 L668.4 327.1 L667.7 327.7 L667.0 328.7 L666.3 329.5 L665.6 331.5 L664.9 330.7 L664.2 326.3 L663.5 326.3 L662.8 326.3 L662.1 326.3 L661.4 326.3 L660.7 326.3 L660.0 326.3 L659.3 326.3 L658.6 326.3 L657.9 326.3 L657.2 326.3 L656.5 326.3 L655.8 326.3 L655.1 326.3 L654.4 326.5 L653.7 326.3 L653.0 326.3 L652.3 326.9 L651.6 327.3 L650.9 327.4 L650.2 327.0 L649.5 327.5 L648.8 328.4 L648.1 328.7 L647.4 330.3 L646.7 327.4 L646.0 326.3 L645.3 326.3 L644.6 326.3 L643.9 326.3 L643.2 326.3 L642.5 326.3 L641.8 326.3 L641.1 326.3 L640.4 326.3 L639.7 326.3 L639.0 326.4 L638.3 326.5 L637.6 326.9 L636.9 327.0 L636.2 326.6 L635.5 328.0 L634.8 327.1 L634.1 327.4 L633.4 330.7 L632.7 327.3 L632.0 326.3 L631.3 326.3 L630.6 326.3 L629.9 326.3 L629.2 326.3 L628.5 326.3 L627.8 326.3 L627.1 326.3 L626.4 326.6 L625.7 326.9 L625.0 326.6 L624.3 327.5 L623.6 327.4 L622.9 328.2 L622.2 328.3 L621.5 330.9 L620.8 329.5 L620.1 326.3 L619.4 326.7 L618.7 326.9 L618.0 326.7 L617.3 326.5 L616.6 327.6 L615.9 327.8 L615.2 328.2 L614.5 329.1 L613.8 330.9 L613.1 330.9 L612.4 329.0 L611.7 328.5 L611.0 329.7 L610.3 331.1 L609.6 328.8 L608.9 333.1 L608.2 330.2 L607.5 337.7 L606.8 331.0 L606.1 326.8 L605.4 326.8 L604.7 326.9 L604.0 326.7 L603.3 327.5 L602.6 328.6 L601.9 330.2 L601.2 330.2 L600.5 326.8 L599.8 327.4 L599.1 327.7 L598.4 326.8 L597.7 328.2 L597.0 328.4 L596.3 327.8 L595.6 331.6 L594.9 329.4 L594.2 327.0 L593.5 326.8 L592.8 327.5 L592.1 327.2 L591.4 327.9 L590.7 328.3 L590.0 328.6 L589.3 329.3 L588.6 330.9 L587.9 330.3 L587.2 326.7 L586.5 326.7 L585.8 327.4 L585.1 326.8 L584.4 327.5 L583.7 327.9 L583.0 327.9 L582.3 329.0 L581.6 329.4 L580.9 331.7 L580.2 331.7 L579.5 329.1 L578.8 328.5 L578.1 330.1 L577.4 328.3 L576.7 331.4 L576.0 329.9 L575.3 334.1 L574.6 338.0 L573.9 335.7 L573.2 328.8 L572.5 329.7 L571.8 328.4 L571.1 329.5 L570.4 331.2 L569.7 332.0 L569.0 337.4 L568.3 337.4 L567.6 329.2 L566.9 326.7 L566.2 327.7 L565.5 328.8 L564.8 327.9 L564.1 329.7 L563.4 329.7 L562.7 330.5 L562.0 333.8 L561.3 333.8 L560.6 330.4 L559.9 327.7 L559.2 328.4 L558.5 327.3 L557.8 328.8 L557.1 330.1 L556.4 329.3 L555.7 329.5 L555.0 334.5 L554.3 334.5 L553.6 329.6 L552.9 330.0 L552.2 328.6 L551.5 331.4 L550.8 332.7 L550.1 333.9 L549.4 331.5 L548.7 338.8 L548.0 337.6 L547.3 327.7 L546.6 326.3 L545.9 326.4 L545.2 326.3 L544.5 326.9 L543.8 327.1 L543.1 327.2 L542.4 327.7 L541.7 327.7 L541.0 327.9 L540.3 328.8 L539.6 327.5 L538.9 331.0 L538.2 331.0 L537.5 327.0 L536.8 327.1 L536.1 327.7 L535.4 326.7 L534.7 327.9 L534.0 327.1 L533.3 328.6 L532.6 329.6 L531.9 331.7 L531.2 331.7 L530.5 328.6 L529.8 328.9 L529.1 329.5 L528.4 328.7 L527.7 330.7 L527.0 330.8 L526.3 332.7 L525.6 330.0 L524.9 337.5 L524.2 337.5 L523.5 331.7 L522.8 328.2 L522.1 329.7 L521.4 329.6 L520.7 329.7 L520.0 331.0 L519.3 333.5 L518.6 336.0 L517.9 333.0 L517.2 328.8 L516.5 328.0 L515.8 329.4 L515.1 329.8 L514.4 328.5 L513.7 329.4 L513.0 331.1 L512.3 330.9 L511.6 336.8 L510.9 332.9 L510.2 329.5 L509.5 329.8 L508.8 328.6 L508.1 328.7 L507.4 332.3 L506.7 331.8 L506.0 331.5 L505.3 336.0 L504.6 339.4 L503.9 336.3 L503.2 328.0 L502.5 327.0 L501.8 326.7 L501.1 327.3 L500.4 327.3 L499.7 327.4 L499.0 327.3 L498.3 327.5 L497.6 326.9 L496.9 328.0 L496.2 328.3 L495.5 328.5 L494.8 328.6 L494.1 327.1 L493.4 328.8 L492.7 327.5 L492.0 329.2 L491.3 328.9 L490.6 329.3 L489.9 329.5 L489.2 328.5 L488.5 329.7 L487.8 330.3 L487.1 330.6 L486.4 331.1 L485.7 330.1 L485.0 331.3 L484.3 330.2 L483.6 329.0 L482.9 329.7 L482.2 329.3 L481.5 332.9 L480.8 333.2 L480.1 330.5 L479.4 331.8 L478.7 339.1 L478.0 337.4 L477.3 328.6 L476.6 326.3 L475.9 326.3 L475.2 326.3 L474.5 326.4 L473.8 326.3 L473.1 326.3 L472.4 326.8 L471.7 327.0 L471.0 327.0 L470.3 327.7 L469.6 326.8 L468.9 327.4 L468.2 328.1 L467.5 329.1 L466.8 328.9 L466.1 329.4 L465.4 332.1 L464.7 329.8 L464.0 328.2 L463.3 330.5 L462.6 329.2 L461.9 333.1 L461.2 334.7 L460.5 337.8 L459.8 334.8 L459.1 327.2 L458.4 328.1 L457.7 328.8 L457.0 328.8 L456.3 329.4 L455.6 330.2 L454.9 329.5 L454.2 329.8 L453.5 331.6 L452.8 329.7 L452.1 334.6 L451.4 337.8 L450.7 333.8 L450.0 326.4 L449.3 326.4 L448.6 326.5 L447.9 327.5 L447.2 327.2 L446.5 327.7 L445.8 327.7 L445.1 329.4 L444.4 330.9 L443.7 333.3 L443.0 330.1 L442.3 327.1 L441.6 327.3 L440.9 328.3 L440.2 328.1 L439.5 329.1 L438.8 328.9 L438.1 330.3 L437.4 333.2 L436.7 336.7 L436.0 332.2 L435.3 330.3 L434.6 331.7 L433.9 334.1 L433.2 336.6 L432.5 340.1 L431.8 336.7 L431.1 330.5 L430.4 331.4 L429.7 333.0 L429.0 338.6 L428.3 338.6 L427.6 331.8 L426.9 329.4 L426.2 332.8 L425.5 334.1 L424.8 340.4 L424.1 340.4 L423.4 329.1 L422.7 329.0 L422.0 328.3 L421.3 330.4 L420.6 330.6 L419.9 330.5 L419.2 330.4 L418.5 336.4 L417.8 332.7 L417.1 326.3 L416.4 326.6 L415.7 327.1 L415.0 327.0 L414.3 327.2 L413.6 328.1 L412.9 328.6 L412.2 328.9 L411.5 329.3 L410.8 329.9 L410.1 331.1 L409.4 333.1 L408.7 330.6 L408.0 328.5 L407.3 327.4 L406.6 329.0 L405.9 328.1 L405.2 328.5 L404.5 329.1 L403.8 329.0 L403.1 331.9 L402.4 334.4 L401.7 337.7 L401.0 332.5 L400.3 332.6 L399.6 330.4 L398.9 335.4 L398.2 333.1 L397.5 341.1 L396.8 332.2 L396.1 327.3 L395.4 328.8 L394.7 329.8 L394.0 330.2 L393.3 332.2 L392.6 334.4 L391.9 332.8 L391.2 329.6 L390.5 328.9 L389.8 330.6 L389.1 329.3 L388.4 329.8 L387.7 334.8 L387.0 339.6 L386.3 339.6 L385.6 331.7 L384.9 326.4 L384.2 326.3 L383.5 326.4 L382.8 326.3 L382.1 326.5 L381.4 326.3 L380.7 326.3 L380.0 326.8 L379.3 326.8 L378.6 327.2 L377.9 327.5 L377.2 327.2 L376.5 327.8 L375.8 328.4 L375.1 328.2 L374.4 327.9 L373.7 328.8 L373.0 329.0 L372.3 329.6 L371.6 328.9 L370.9 331.3 L370.2 332.3 L369.5 331.4 L368.8 330.2 L368.1 331.0 L367.4 338.0 L366.7 330.5 L366.0 327.3 L365.3 327.2 L364.6 327.8 L363.9 328.1 L363.2 327.2 L362.5 327.2 L361.8 328.0 L361.1 329.4 L360.4 328.7 L359.7 328.6 L359.0 328.4 L358.3 328.8 L357.6 331.4 L356.9 334.1 L356.2 334.1 L355.5 331.0 L354.8 329.8 L354.1 330.2 L353.4 332.0 L352.7 331.0 L352.0 332.3 L351.3 332.1 L350.6 335.2 L349.9 341.9 L349.2 341.9 L348.5 333.4 L347.8 327.7 L347.1 327.1 L346.4 328.8 L345.7 328.8 L345.0 330.8 L344.3 332.5 L343.6 332.1 L342.9 338.2 L342.2 338.2 L341.5 328.8 L340.8 326.4 L340.1 326.3 L339.4 326.3 L338.7 326.4 L338.0 326.4 L337.3 326.3 L336.6 327.6 L335.9 328.0 L335.2 327.1 L334.5 329.1 L333.8 331.1 L333.1 331.1 L332.4 327.3 L331.7 326.3 L331.0 326.6 L330.3 326.7 L329.6 327.6 L328.9 326.5 L328.2 327.4 L327.5 327.8 L326.8 328.2 L326.1 328.4 L325.4 328.9 L324.7 328.3 L324.0 329.3 L323.3 328.7 L322.6 329.3 L321.9 334.1 L321.2 334.1 L320.5 328.5 L319.8 326.5 L319.1 327.2 L318.4 327.4 L317.7 327.1 L317.0 327.6 L316.3 328.0 L315.6 327.1 L314.9 328.4 L314.2 327.8 L313.5 330.8 L312.8 329.1 L312.1 326.4 L311.4 327.6 L310.7 326.5 L310.0 327.4 L309.3 327.2 L308.6 326.6 L307.9 327.5 L307.2 326.5 L306.5 327.2 L305.8 329.2 L305.1 329.2 L304.4 326.6 L303.7 326.3 L303.0 326.4 L302.3 326.3 L301.6 326.3 L300.9 326.3 L300.2 326.3 L299.5 326.5 L298.8 326.4 L298.1 326.3 L297.4 326.3 L296.7 326.3 L296.0 326.9 L295.3 326.9 L294.6 328.2 L293.9 327.9 L293.2 326.5 L292.5 326.4 L291.8 326.3 L291.1 326.3 L290.4 326.5 L289.7 326.4 L289.0 326.5 L288.3 326.3 L287.6 326.3 L286.9 326.4 L286.2 326.3 L285.5 326.5 L284.8 326.3 L284.1 326.3 L283.4 326.4 L282.7 326.5 L282.0 326.5Z" fill="#2b2e35"/>
</svg>
<div class="a" style="left:287px;top:246px;width:34px;height:15px;background:#5f6269;border-radius:3px;opacity:0.95"></div>
<div class="a" style="left:287px;top:303.5px;width:42.5px;height:15px;background:#5f6269;border-radius:3px;opacity:0.95"></div>
<div class="a" style="left:280.7px;top:234px;width:1.5px;height:118px;background:#5a62d8"></div>
<svg style="left:276px;top:231px" width="11" height="6" viewBox="0 0 11 6"><path d="M0 0H11L5.5 6Z" fill="#5a62d8"/></svg>

<!-- BOTTOM TIMELINE -->
<div class="a" style="left:39px;top:367px;width:961px;height:94px;background:#fff"></div>
<svg style="left:54px;top:383px" width="8" height="8" viewBox="0 0 8 8"><circle cx="1.6" cy="1.6" r="1.2" fill="none" stroke="#333" stroke-width="1.2"/><circle cx="1.6" cy="6.4" r="1.2" fill="none" stroke="#333" stroke-width="1.2"/><path d="M2.6 2.3L7.6 7.2M2.6 5.7L7.6 0.8" stroke="#333" stroke-width="1"/></svg>

<div class="a" style="left:493.5px;top:381px;width:11px;height:11px;background:#f2f2f4;border-radius:50%"></div>
<svg style="left:496px;top:384.5px" width="6" height="4" viewBox="0 0 6 4"><path d="M3 0L0 2L3 4ZM6 0L3 2L6 4Z" fill="#222"/></svg>
<div class="a" style="left:508.5px;top:374.5px;width:24px;height:24px;background:#f2f2f4;border-radius:50%"></div>
<svg style="left:517.5px;top:382px" width="8" height="9.5" viewBox="0 0 8 9.5"><path d="M0.5 0.5L7.5 4.75L0.5 9Z" fill="#222"/></svg>
<div class="a" style="left:538.5px;top:381px;width:11px;height:11px;background:#f2f2f4;border-radius:50%"></div>
<svg style="left:541px;top:384.5px" width="6" height="4" viewBox="0 0 6 4"><path d="M0 0L3 2L0 4ZM3 0L6 2L3 4Z" fill="#222"/></svg>

<svg style="left:864px;top:382px" width="9" height="9" viewBox="0 0 9 9"><circle cx="3.8" cy="3.8" r="3.1" fill="none" stroke="#333" stroke-width="1"/><path d="M6 6L8.5 8.5" stroke="#333" stroke-width="1.2"/><path d="M2.3 3.8H5.3" stroke="#333" stroke-width="0.9"/></svg>
<div class="a" style="left:881px;top:386px;width:67px;height:1.5px;background:#e6e6e9"></div>
<div class="a" style="left:881px;top:386px;width:33px;height:2px;background:#5a62c8"></div>
<div class="a" style="left:909px;top:381.7px;width:10px;height:10px;border:1.8px solid #5a62c8;background:#fff;border-radius:50%"></div>
<svg style="left:955.5px;top:382px" width="9" height="9" viewBox="0 0 9 9"><circle cx="3.8" cy="3.8" r="3.1" fill="none" stroke="#333" stroke-width="1"/><path d="M6 6L8.5 8.5" stroke="#333" stroke-width="1.2"/><path d="M2.3 3.8H5.3M3.8 2.3V5.3" stroke="#333" stroke-width="0.9"/></svg>

<div class="a" style="left:78.4px;top:410.5px;width:1px;height:2px;background:#d0d0d4"></div>
<div class="a" style="left:109.7px;top:410.5px;width:1px;height:2px;background:#d0d0d4"></div>
<div class="a" style="left:141.0px;top:410.5px;width:1px;height:2px;background:#d0d0d4"></div>
<div class="a" style="left:172.4px;top:410.5px;width:1px;height:2px;background:#d0d0d4"></div>
<div class="a" style="left:235.1px;top:410.5px;width:1px;height:2px;background:#d0d0d4"></div>
<div class="a" style="left:266.4px;top:410.5px;width:1px;height:2px;background:#d0d0d4"></div>
<div class="a" style="left:297.8px;top:410.5px;width:1px;height:2px;background:#d0d0d4"></div>
<div class="a" style="left:329.2px;top:410.5px;width:1px;height:2px;background:#d0d0d4"></div>
<div class="a" style="left:391.8px;top:410.5px;width:1px;height:2px;background:#d0d0d4"></div>
<div class="a" style="left:423.2px;top:410.5px;width:1px;height:2px;background:#d0d0d4"></div>
<div class="a" style="left:454.5px;top:410.5px;width:1px;height:2px;background:#d0d0d4"></div>
<div class="a" style="left:485.9px;top:410.5px;width:1px;height:2px;background:#d0d0d4"></div>
<div class="a" style="left:548.6px;top:410.5px;width:1px;height:2px;background:#d0d0d4"></div>
<div class="a" style="left:579.9px;top:410.5px;width:1px;height:2px;background:#d0d0d4"></div>
<div class="a" style="left:611.3px;top:410.5px;width:1px;height:2px;background:#d0d0d4"></div>
<div class="a" style="left:642.6px;top:410.5px;width:1px;height:2px;background:#d0d0d4"></div>
<div class="a" style="left:705.3px;top:410.5px;width:1px;height:2px;background:#d0d0d4"></div>
<div class="a" style="left:736.7px;top:410.5px;width:1px;height:2px;background:#d0d0d4"></div>
<div class="a" style="left:768.1px;top:410.5px;width:1px;height:2px;background:#d0d0d4"></div>
<div class="a" style="left:799.4px;top:410.5px;width:1px;height:2px;background:#d0d0d4"></div>
<div class="a" style="left:862.1px;top:410.5px;width:1px;height:2px;background:#d0d0d4"></div>
<div class="a" style="left:893.4px;top:410.5px;width:1px;height:2px;background:#d0d0d4"></div>
<div class="a" style="left:924.8px;top:410.5px;width:1px;height:2px;background:#d0d0d4"></div>
<div class="a" style="left:956.1px;top:410.5px;width:1px;height:2px;background:#d0d0d4"></div>
<div class="a" style="left:47px;top:418px;width:945px;height:1px;background:#f2f2f4"></div>
<div class="a" style="left:47px;top:421.5px;width:945px;height:31.5px;background:#ededef"></div>
<svg style="left:0;top:0" width="1000" height="461" viewBox="0 0 1000 461">
<path d="M47.0 435.9 L47.7 436.0 L48.4 435.9 L49.1 435.7 L49.8 436.0 L50.5 435.7 L51.2 435.7 L51.9 436.0 L52.6 436.0 L53.3 436.0 L54.0 435.7 L54.7 435.9 L55.4 435.7 L56.1 435.7 L56.8 435.9 L57.5 435.9 L58.2 435.9 L58.9 435.9 L59.6 436.0 L60.3 436.0 L61.0 435.8 L61.7 435.8 L62.4 436.0 L63.1 436.0 L63.8 436.0 L64.5 435.7 L65.2 435.1 L65.9 435.1 L66.6 435.6 L67.3 436.0 L68.0 435.7 L68.7 436.0 L69.4 435.7 L70.1 435.7 L70.8 436.0 L71.5 435.9 L72.2 435.7 L72.9 435.7 L73.6 435.7 L74.3 435.7 L75.0 436.0 L75.7 435.8 L76.4 435.7 L77.1 436.0 L77.8 434.0 L78.5 433.3 L79.2 434.9 L79.9 434.5 L80.6 434.7 L81.3 435.2 L82.0 435.6 L82.7 434.7 L83.4 431.4 L84.1 432.5 L84.8 434.5 L85.5 433.6 L86.2 434.9 L86.9 432.1 L87.6 431.4 L88.3 433.1 L89.0 433.0 L89.7 433.8 L90.4 434.3 L91.1 435.2 L91.8 431.1 L92.5 429.6 L93.2 432.0 L93.9 432.6 L94.6 433.9 L95.3 432.4 L96.0 432.3 L96.7 432.3 L97.4 434.1 L98.1 434.1 L98.8 435.4 L99.5 435.3 L100.2 435.2 L100.9 435.7 L101.6 436.0 L102.3 435.7 L103.0 435.9 L103.7 435.8 L104.4 434.7 L105.1 431.4 L105.8 431.4 L106.5 434.0 L107.2 433.6 L107.9 435.0 L108.6 434.7 L109.3 435.7 L110.0 435.9 L110.7 436.0 L111.4 435.7 L112.1 436.0 L112.8 431.6 L113.5 427.7 L114.2 430.4 L114.9 430.3 L115.6 431.1 L116.3 432.9 L117.0 434.1 L117.7 434.8 L118.4 435.4 L119.1 435.8 L119.8 435.7 L120.5 432.6 L121.2 423.0 L121.9 423.0 L122.6 426.0 L123.3 429.8 L124.0 430.7 L124.7 429.5 L125.4 428.3 L126.1 431.6 L126.8 431.4 L127.5 430.4 L128.2 431.5 L128.9 431.5 L129.6 433.2 L130.3 433.1 L131.0 435.0 L131.7 434.3 L132.4 435.9 L133.1 436.0 L133.8 435.8 L134.5 435.7 L135.2 435.9 L135.9 436.0 L136.6 435.7 L137.3 434.8 L138.0 427.7 L138.7 427.7 L139.4 431.3 L140.1 431.0 L140.8 430.2 L141.5 432.5 L142.2 431.6 L142.9 433.1 L143.6 433.3 L144.3 433.2 L145.0 434.7 L145.7 435.1 L146.4 434.4 L147.1 435.5 L147.8 435.8 L148.5 436.0 L149.2 436.0 L149.9 436.0 L150.6 436.0 L151.3 436.0 L152.0 435.7 L152.7 436.0 L153.4 435.9 L154.1 435.8 L154.8 434.6 L155.5 432.3 L156.2 433.9 L156.9 434.2 L157.6 435.1 L158.3 435.4 L159.0 435.2 L159.7 429.2 L160.4 425.8 L161.1 430.9 L161.8 432.1 L162.5 432.8 L163.2 431.3 L163.9 432.5 L164.6 434.2 L165.3 435.5 L166.0 435.8 L166.7 431.1 L167.4 424.1 L168.1 430.6 L168.8 428.8 L169.5 429.1 L170.2 429.9 L170.9 432.1 L171.6 430.0 L172.3 431.0 L173.0 431.9 L173.7 431.9 L174.4 433.7 L175.1 432.2 L175.8 432.6 L176.5 434.5 L177.2 434.5 L177.9 434.9 L178.6 436.0 L179.3 436.0 L180.0 435.7 L180.7 436.0 L181.4 435.8 L182.1 435.7 L182.8 435.7 L183.5 435.8 L184.2 435.9 L184.9 435.8 L185.6 435.9 L186.3 435.7 L187.0 436.0 L187.7 436.0 L188.4 436.0 L189.1 436.0 L189.8 433.3 L190.5 429.6 L191.2 431.2 L191.9 433.6 L192.6 432.6 L193.3 433.3 L194.0 434.9 L194.7 429.8 L195.4 422.1 L196.1 424.1 L196.8 428.6 L197.5 431.1 L198.2 429.4 L198.9 430.3 L199.6 430.4 L200.3 431.5 L201.0 427.9 L201.7 425.8 L202.4 428.2 L203.1 431.7 L203.8 432.6 L204.5 430.5 L205.2 432.2 L205.9 432.7 L206.6 432.3 L207.3 427.7 L208.0 427.7 L208.7 430.0 L209.4 432.4 L210.1 431.4 L210.8 432.8 L211.5 434.3 L212.2 434.4 L212.9 434.9 L213.6 432.6 L214.3 427.7 L215.0 427.7 L215.7 432.1 L216.4 432.9 L217.1 433.8 L217.8 433.9 L218.5 434.8 L219.2 435.5 L219.9 435.8 L220.6 427.8 L221.3 422.1 L222.0 422.1 L222.7 428.3 L223.4 429.2 L224.1 429.4 L224.8 432.4 L225.5 431.9 L226.2 433.7 L226.9 429.1 L227.6 425.8 L228.3 427.7 L229.0 429.6 L229.7 430.0 L230.4 431.7 L231.1 433.7 L231.8 434.3 L232.5 434.4 L233.2 434.7 L233.9 435.2 L234.6 435.7 L235.3 435.7 L236.0 436.0 L236.7 436.0 L237.4 432.4 L238.1 423.0 L238.8 423.0 L239.5 426.4 L240.2 427.4 L240.9 428.0 L241.6 428.5 L242.3 430.0 L243.0 432.1 L243.7 433.6 L244.4 431.9 L245.1 433.5 L245.8 432.7 L246.5 427.7 L247.2 431.5 L247.9 433.2 L248.6 432.5 L249.3 433.2 L250.0 433.3 L250.7 434.7 L251.4 435.5 L252.1 435.9 L252.8 432.8 L253.5 430.5 L254.2 434.0 L254.9 433.7 L255.6 433.0 L256.3 434.7 L257.0 434.5 L257.7 435.5 L258.4 436.0 L259.1 436.0 L259.8 435.8 L260.5 436.0 L261.2 435.7 L261.9 435.8 L262.6 436.0 L263.3 433.6 L264.0 422.9 L264.7 423.0 L265.4 426.9 L266.1 427.2 L266.8 430.5 L267.5 428.9 L268.2 432.3 L268.9 432.9 L269.6 431.1 L270.3 425.8 L271.0 425.8 L271.7 429.1 L272.4 431.5 L273.1 431.0 L273.8 430.9 L274.5 430.9 L275.2 424.9 L275.9 424.9 L276.6 430.4 L277.3 428.8 L278.0 429.3 L278.7 432.1 L279.4 431.6 L280.1 432.7 L280.8 429.6 L281.5 426.8 L282.2 431.9 L282.9 432.5 L283.6 432.7 L284.3 432.1 L285.0 434.4 L285.7 434.0 L286.4 432.3 L287.1 424.0 L287.8 424.0 L288.5 430.1 L289.2 431.2 L289.9 429.6 L290.6 433.1 L291.3 432.1 L292.0 434.3 L292.7 430.3 L293.4 421.9 L294.1 425.7 L294.8 424.5 L295.5 429.0 L296.2 426.9 L296.9 428.4 L297.6 431.3 L298.3 431.2 L299.0 433.2 L299.7 428.9 L300.4 424.0 L301.1 427.8 L301.8 429.8 L302.5 431.5 L303.2 431.7 L303.9 432.5 L304.6 433.1 L305.3 434.1 L306.0 427.7 L306.7 425.8 L307.4 429.3 L308.1 431.5 L308.8 431.1 L309.5 429.8 L310.2 422.1 L310.9 422.1 L311.6 425.4 L312.3 429.7 L313.0 427.5 L313.7 430.4 L314.4 429.7 L315.1 431.3 L315.8 428.4 L316.5 425.8 L317.2 428.0 L317.9 428.8 L318.6 430.0 L319.3 432.5 L320.0 424.6 L320.7 424.0 L321.4 428.4 L322.1 429.0 L322.8 428.4 L323.5 431.9 L324.2 431.6 L324.9 431.9 L325.6 433.7 L326.3 433.8 L327.0 435.3 L327.7 430.3 L328.4 424.0 L329.1 426.9 L329.8 430.6 L330.5 430.1 L331.2 429.5 L331.9 430.1 L332.6 430.9 L333.3 433.8 L334.0 425.7 L334.7 425.8 L335.4 429.4 L336.1 432.2 L336.8 432.3 L337.5 432.6 L338.2 433.6 L338.9 429.3 L339.6 424.1 L340.3 426.7 L341.0 428.2 L341.7 428.4 L342.4 430.5 L343.1 431.1 L343.8 431.5 L344.5 433.2 L345.2 428.6 L345.9 428.6 L346.6 432.4 L347.3 432.5 L348.0 432.2 L348.7 434.4 L349.4 434.1 L350.1 427.7 L350.8 427.7 L351.5 430.6 L352.2 431.0 L352.9 433.1 L353.6 434.4 L354.3 434.5 L355.0 435.4 L355.7 426.5 L356.4 421.9 L357.1 424.6 L357.8 429.4 L358.5 426.6 L359.2 428.0 L359.9 429.9 L360.6 432.8 L361.3 432.3 L362.0 434.0 L362.7 433.5 L363.4 431.4 L364.1 432.9 L364.8 434.7 L365.5 434.3 L366.2 433.9 L366.9 434.8 L367.6 435.2 L368.3 435.9 L369.0 436.0 L369.7 435.7 L370.4 436.0 L371.1 435.8 L371.8 430.3 L372.5 428.6 L373.2 432.0 L373.9 431.2 L374.6 433.0 L375.3 432.6 L376.0 431.8 L376.7 430.5 L377.4 432.4 L378.1 432.5 L378.8 433.2 L379.5 434.4 L380.2 435.0 L380.9 435.9 L381.6 436.0 L382.3 435.7 L383.0 435.8 L383.7 435.8 L384.4 436.0 L385.1 435.9 L385.8 433.2 L386.5 432.3 L387.2 434.1 L387.9 434.5 L388.6 434.4 L389.3 435.4 L390.0 435.1 L390.7 435.6 L391.4 435.9 L392.1 435.9 L392.8 435.9 L393.5 433.0 L394.2 426.6 L394.9 426.6 L395.6 429.9 L396.3 431.1 L397.0 432.1 L397.7 431.6 L398.4 433.2 L399.1 432.5 L399.8 433.5 L400.5 434.0 L401.2 434.5 L401.9 435.0 L402.6 436.0 L403.3 436.0 L404.0 436.0 L404.7 435.4 L405.4 434.2 L406.1 435.1 L406.8 434.9 L407.5 435.5 L408.2 435.6 L408.9 435.7 L409.6 436.0 L410.3 436.0 L411.0 435.9 L411.7 435.7 L412.4 435.9 L413.1 435.7 L413.8 435.7 L414.5 436.0 L415.2 435.8 L415.9 435.8 L416.6 436.0 L417.3 435.8 L418.0 434.0 L418.7 433.3 L419.4 434.3 L420.1 435.5 L420.8 435.1 L421.5 435.3 L422.2 436.0 L422.9 436.0 L423.6 431.1 L424.3 425.5 L425.0 425.5 L425.7 428.0 L426.4 428.2 L427.1 431.1 L427.8 432.2 L428.5 431.7 L429.2 432.0 L429.9 431.6 L430.6 431.5 L431.3 433.2 L432.0 432.5 L432.7 434.0 L433.4 433.9 L434.1 435.3 L434.8 435.0 L435.5 436.0 L436.2 435.8 L436.9 435.7 L437.6 435.9 L438.3 435.9 L439.0 436.0 L439.7 435.8 L440.4 435.7 L441.1 436.0 L441.8 431.7 L442.5 429.9 L443.2 433.7 L443.9 432.7 L444.6 433.1 L445.3 433.9 L446.0 434.6 L446.7 435.1 L447.4 436.0 L448.1 435.9 L448.8 431.1 L449.5 427.1 L450.2 431.2 L450.9 430.9 L451.6 430.7 L452.3 432.3 L453.0 430.8 L453.7 431.2 L454.4 432.3 L455.1 432.9 L455.8 433.2 L456.5 432.8 L457.2 433.1 L457.9 434.1 L458.6 434.4 L459.3 434.8 L460.0 435.7 L460.7 436.0 L461.4 435.7 L462.1 435.7 L462.8 436.0 L463.5 435.8 L464.2 435.7 L464.9 435.7 L465.6 435.7 L466.3 436.0 L467.0 435.7 L467.7 435.8 L468.4 436.0 L469.1 435.9 L469.8 436.0 L470.5 435.9 L471.2 435.7 L471.9 436.0 L472.6 435.8 L473.3 435.9 L474.0 435.7 L474.7 436.0 L475.4 433.4 L476.1 427.7 L476.8 427.7 L477.5 430.1 L478.2 432.9 L478.9 430.2 L479.6 432.2 L480.3 431.6 L481.0 433.4 L481.7 433.8 L482.4 432.8 L483.1 433.2 L483.8 433.3 L484.5 433.7 L485.2 434.2 L485.9 434.7 L486.6 435.3 L487.3 436.0 L488.0 436.0 L488.7 435.8 L489.4 436.0 L490.1 435.8 L490.8 435.7 L491.5 435.8 L492.2 436.0 L492.9 435.8 L493.6 436.0 L494.3 436.0 L495.0 436.0 L495.7 435.8 L496.4 435.7 L497.1 435.8 L497.8 435.9 L498.5 435.8 L499.2 435.7 L499.9 436.0 L500.6 435.8 L501.3 435.9 L502.0 436.0 L502.7 432.8 L503.4 428.8 L504.1 430.5 L504.8 431.5 L505.5 433.4 L506.2 432.3 L506.9 432.8 L507.6 433.2 L508.3 434.6 L509.0 435.7 L509.7 433.6 L510.4 430.5 L511.1 432.9 L511.8 433.8 L512.5 433.6 L513.2 433.5 L513.9 433.5 L514.6 433.4 L515.3 430.5 L516.0 430.5 L516.7 432.2 L517.4 433.0 L518.1 433.7 L518.8 434.1 L519.5 434.6 L520.2 430.5 L520.9 430.5 L521.6 432.0 L522.3 432.6 L523.0 434.1 L523.7 434.2 L524.4 433.6 L525.1 428.6 L525.8 428.6 L526.5 430.5 L527.2 432.3 L527.9 432.1 L528.6 434.2 L529.3 433.8 L530.0 434.0 L530.7 434.5 L531.4 435.8 L532.1 436.0 L532.8 435.7 L533.5 435.8 L534.2 436.0 L534.9 435.4 L535.6 435.1 L536.3 435.5 L537.0 435.8 L537.7 435.9 L538.4 435.9 L539.1 435.9 L539.8 436.0 L540.5 435.8 L541.2 435.8 L541.9 436.0 L542.6 436.0 L543.3 435.7 L544.0 435.9 L544.7 435.8 L545.4 436.0 L546.1 435.7 L546.8 430.1 L547.5 427.7 L548.2 429.0 L548.9 429.6 L549.6 430.1 L550.3 432.5 L551.0 431.0 L551.7 433.3 L552.4 432.0 L553.1 433.6 L553.8 433.7 L554.5 434.1 L555.2 433.7 L555.9 433.7 L556.6 431.4 L557.3 433.6 L558.0 434.2 L558.7 433.1 L559.4 434.3 L560.1 433.9 L560.8 434.7 L561.5 435.5 L562.2 435.4 L562.9 435.7 L563.6 436.0 L564.3 435.7 L565.0 435.7 L565.7 435.8 L566.4 435.4 L567.1 429.9 L567.8 429.9 L568.5 431.9 L569.2 433.4 L569.9 432.5 L570.6 433.6 L571.3 434.7 L572.0 434.4 L572.7 434.9 L573.4 434.5 L574.1 431.4 L574.8 431.4 L575.5 432.9 L576.2 433.7 L576.9 434.1 L577.6 433.7 L578.3 434.2 L579.0 434.2 L579.7 435.5 L580.4 434.2 L581.1 435.0 L581.8 434.9 L582.5 435.4 L583.2 435.8 L583.9 435.5 L584.6 436.0 L585.3 435.8 L586.0 436.0 L586.7 435.9 L587.4 436.0 L588.1 435.7 L588.8 435.7 L589.5 435.8 L590.2 435.1 L590.9 435.1 L591.6 436.0 L592.3 435.9 L593.0 436.0 L593.7 435.8 L594.4 436.0 L595.1 436.0 L595.8 436.0 L596.5 436.0 L597.2 436.0 L597.9 436.0 L598.6 435.8 L599.3 436.0 L600.0 434.5 L600.7 434.2 L601.4 435.6 L602.1 435.1 L602.8 435.8 L603.5 436.0 L604.2 436.0 L604.9 435.7 L605.6 435.8 L606.3 435.0 L607.0 430.5 L607.7 430.5 L608.4 432.0 L609.1 432.9 L609.8 433.1 L610.5 434.2 L611.2 434.6 L611.9 435.7 L612.6 435.8 L613.3 436.0 L614.0 435.7 L614.7 435.9 L615.4 434.2 L616.1 435.2 L616.8 435.4 L617.5 435.9 L618.2 435.8 L618.9 435.7 L619.6 436.0 L620.3 436.0 L621.0 435.8 L621.7 436.0 L622.4 435.9 L623.1 436.0 L623.8 436.0 L624.5 436.0 L625.2 435.9 L625.9 436.0 L626.6 436.0 L627.3 435.8 L628.0 435.7 L628.7 435.9 L629.4 436.0 L630.1 436.0 L630.8 436.0 L631.5 436.0 L632.2 436.0 L632.9 435.8 L633.6 435.6 L634.3 434.2 L635.0 434.2 L635.7 434.9 L636.4 435.8 L637.1 435.5 L637.8 436.0 L638.5 435.9 L639.2 436.0 L639.9 435.8 L640.6 435.7 L641.3 436.0 L642.0 435.7 L642.7 435.8 L643.4 436.0 L644.1 435.7 L644.8 435.7 L645.5 436.0 L646.2 435.7 L646.9 435.9 L647.6 435.5 L648.3 434.2 L649.0 434.2 L649.7 435.0 L650.4 435.7 L651.1 435.5 L651.8 436.0 L652.5 435.8 L653.2 436.0 L653.9 436.0 L654.6 435.8 L655.3 435.7 L656.0 435.9 L656.7 435.8 L657.4 435.9 L658.1 435.8 L658.8 435.7 L659.5 435.8 L660.2 435.8 L660.9 436.0 L661.6 436.0 L662.3 436.0 L663.0 435.9 L663.7 435.9 L664.4 435.4 L665.1 432.3 L665.8 432.3 L666.5 433.8 L667.2 435.0 L667.9 434.6 L668.6 435.5 L669.3 435.6 L670.0 435.7 L670.7 435.7 L671.4 435.8 L672.1 436.0 L672.8 436.0 L673.5 435.7 L674.2 435.9 L674.9 435.9 L675.6 436.0 L676.3 436.0 L677.0 436.0 L677.7 436.0 L678.4 436.0 L679.1 435.7 L679.8 435.8 L680.5 435.7 L681.2 435.7 L681.9 435.7 L682.6 436.0 L683.3 435.7 L684.0 436.0 L684.7 435.8 L685.4 436.0 L686.1 434.8 L686.8 434.8 L687.5 436.0 L688.2 435.5 L688.9 435.9 L689.6 435.7 L690.3 435.8 L691.0 435.7 L691.7 435.7 L692.4 435.9 L693.1 436.0 L693.8 435.8 L694.5 435.7 L695.2 435.9 L695.9 436.0 L696.6 436.0 L697.3 435.4 L698.0 427.7 L698.7 427.7 L699.4 430.4 L700.1 430.3 L700.8 432.6 L701.5 431.7 L702.2 432.2 L702.9 433.4 L703.6 434.6 L704.3 434.7 L705.0 432.3 L705.7 432.3 L706.4 433.6 L707.1 434.4 L707.8 435.2 L708.5 434.7 L709.2 434.9 L709.9 435.6 L710.6 435.6 L711.3 435.9 L712.0 435.9 L712.7 435.7 L713.4 435.7 L714.1 435.9 L714.8 435.7 L715.5 435.8 L716.2 435.9 L716.9 436.0 L717.6 435.7 L718.3 436.0 L719.0 436.0 L719.7 435.8 L720.4 435.8 L721.1 436.0 L721.8 435.8 L722.5 435.9 L723.2 435.7 L723.9 435.8 L724.6 436.0 L725.3 436.0 L726.0 435.8 L726.7 433.0 L727.4 431.4 L728.1 432.7 L728.8 434.1 L729.5 433.1 L730.2 433.5 L730.9 434.6 L731.6 435.0 L732.3 435.7 L733.0 435.7 L733.7 436.0 L734.4 436.0 L735.1 436.0 L735.8 436.0 L736.5 436.0 L737.2 435.9 L737.9 435.7 L738.6 436.0 L739.3 435.7 L740.0 436.0 L740.7 435.7 L741.4 435.8 L742.1 435.9 L742.8 435.7 L743.5 435.9 L744.2 435.7 L744.9 435.9 L745.6 435.9 L746.3 436.0 L747.0 435.9 L747.7 435.8 L748.4 435.7 L749.1 435.7 L749.8 435.7 L750.5 435.7 L751.2 436.0 L751.9 435.8 L752.6 435.5 L753.3 433.3 L754.0 433.3 L754.7 435.0 L755.4 434.7 L756.1 435.4 L756.8 435.3 L757.5 435.8 L758.2 435.9 L758.9 435.9 L759.6 436.0 L760.3 435.9 L761.0 436.0 L761.7 435.8 L762.4 435.7 L763.1 435.9 L763.8 435.8 L764.5 436.0 L765.2 436.0 L765.9 436.0 L766.6 435.7 L767.3 436.0 L768.0 435.5 L768.7 435.5 L769.4 436.0 L770.1 436.0 L770.8 435.8 L771.5 436.0 L772.2 435.8 L772.9 435.9 L773.6 435.8 L774.3 435.7 L775.0 435.8 L775.7 435.8 L776.4 436.0 L777.1 436.0 L777.8 436.0 L778.5 436.0 L779.2 436.0 L779.9 436.0 L780.6 435.7 L781.3 435.8 L782.0 435.7 L782.7 435.8 L783.4 436.0 L784.1 435.9 L784.8 435.7 L785.5 435.7 L786.2 436.0 L786.9 436.0 L787.6 435.9 L788.3 436.0 L789.0 436.0 L789.7 436.0 L790.4 435.7 L791.1 436.0 L791.8 436.0 L792.5 435.9 L793.2 435.9 L793.9 435.9 L794.6 435.9 L795.3 435.5 L796.0 435.5 L796.7 435.9 L797.4 436.0 L798.1 435.7 L798.8 435.8 L799.5 436.0 L800.2 436.0 L800.9 436.0 L801.6 435.7 L802.3 436.0 L803.0 436.0 L803.7 436.0 L804.4 435.9 L805.1 435.5 L805.8 435.5 L806.5 435.7 L807.2 436.0 L807.9 435.9 L808.6 436.0 L809.3 435.7 L810.0 436.0 L810.7 436.0 L811.4 435.8 L812.1 435.7 L812.8 435.8 L813.5 435.9 L814.2 436.0 L814.9 435.7 L815.6 435.5 L816.3 435.8 L817.0 436.0 L817.7 435.7 L818.4 435.8 L819.1 435.8 L819.8 435.7 L820.5 435.8 L821.2 436.0 L821.9 436.0 L822.6 435.5 L823.3 435.8 L824.0 435.8 L824.7 435.8 L825.4 436.0 L825.4 438.0 L824.7 438.2 L824.0 438.0 L823.3 438.3 L822.6 438.5 L821.9 438.1 L821.2 438.0 L820.5 438.2 L819.8 438.3 L819.1 438.0 L818.4 438.1 L817.7 438.0 L817.0 438.2 L816.3 438.1 L815.6 438.5 L814.9 438.0 L814.2 438.1 L813.5 438.2 L812.8 438.0 L812.1 438.0 L811.4 438.2 L810.7 438.2 L810.0 438.0 L809.3 438.3 L808.6 438.0 L807.9 438.0 L807.2 438.0 L806.5 438.3 L805.8 438.5 L805.1 438.5 L804.4 438.0 L803.7 438.3 L803.0 438.0 L802.3 438.0 L801.6 438.1 L800.9 438.0 L800.2 438.0 L799.5 438.0 L798.8 438.0 L798.1 438.2 L797.4 438.1 L796.7 438.1 L796.0 438.5 L795.3 438.5 L794.6 438.3 L793.9 438.2 L793.2 438.3 L792.5 438.3 L791.8 438.0 L791.1 438.0 L790.4 438.1 L789.7 438.3 L789.0 438.3 L788.3 438.2 L787.6 438.3 L786.9 438.3 L786.2 438.3 L785.5 438.0 L784.8 438.0 L784.1 438.2 L783.4 438.1 L782.7 438.0 L782.0 438.1 L781.3 438.0 L780.6 438.0 L779.9 438.2 L779.2 438.0 L778.5 438.1 L777.8 438.1 L777.1 438.0 L776.4 438.3 L775.7 438.1 L775.0 438.2 L774.3 438.1 L773.6 438.2 L772.9 438.2 L772.2 438.3 L771.5 438.2 L770.8 438.0 L770.1 438.0 L769.4 438.2 L768.7 438.5 L768.0 438.5 L767.3 438.3 L766.6 438.1 L765.9 438.3 L765.2 438.3 L764.5 438.0 L763.8 438.3 L763.1 438.1 L762.4 438.0 L761.7 438.0 L761.0 438.3 L760.3 438.3 L759.6 438.1 L758.9 438.0 L758.2 438.0 L757.5 438.0 L756.8 438.1 L756.1 438.9 L755.4 438.7 L754.7 439.7 L754.0 440.6 L753.3 440.6 L752.6 439.0 L751.9 438.0 L751.2 438.1 L750.5 438.2 L749.8 438.2 L749.1 438.0 L748.4 438.0 L747.7 438.0 L747.0 438.0 L746.3 438.0 L745.6 438.2 L744.9 438.3 L744.2 438.0 L743.5 438.0 L742.8 438.2 L742.1 438.0 L741.4 438.0 L740.7 438.3 L740.0 438.1 L739.3 438.0 L738.6 438.3 L737.9 438.2 L737.2 438.1 L736.5 438.2 L735.8 438.1 L735.1 438.3 L734.4 438.0 L733.7 438.1 L733.0 438.6 L732.3 438.5 L731.6 439.6 L730.9 438.8 L730.2 439.6 L729.5 439.7 L728.8 440.3 L728.1 440.2 L727.4 442.5 L726.7 439.3 L726.0 438.0 L725.3 438.2 L724.6 438.1 L723.9 438.2 L723.2 438.3 L722.5 438.0 L721.8 438.1 L721.1 438.0 L720.4 438.2 L719.7 438.0 L719.0 438.0 L718.3 438.3 L717.6 438.2 L716.9 438.1 L716.2 438.3 L715.5 438.2 L714.8 438.3 L714.1 438.2 L713.4 438.1 L712.7 438.0 L712.0 438.1 L711.3 438.2 L710.6 438.4 L709.9 438.8 L709.2 439.2 L708.5 438.7 L707.8 439.4 L707.1 439.1 L706.4 440.2 L705.7 441.6 L705.0 441.6 L704.3 439.0 L703.6 439.0 L702.9 439.3 L702.2 441.7 L701.5 441.4 L700.8 441.4 L700.1 441.5 L699.4 444.7 L698.7 446.1 L698.0 446.1 L697.3 439.3 L696.6 438.3 L695.9 438.3 L695.2 438.1 L694.5 438.1 L693.8 438.3 L693.1 438.2 L692.4 438.2 L691.7 438.3 L691.0 438.1 L690.3 438.1 L689.6 438.0 L688.9 438.1 L688.2 438.4 L687.5 438.1 L686.8 439.2 L686.1 439.2 L685.4 438.0 L684.7 438.0 L684.0 438.0 L683.3 438.0 L682.6 438.3 L681.9 438.2 L681.2 438.2 L680.5 438.0 L679.8 438.0 L679.1 438.1 L678.4 438.0 L677.7 438.0 L677.0 438.2 L676.3 438.0 L675.6 438.0 L674.9 438.2 L674.2 438.2 L673.5 438.0 L672.8 438.0 L672.1 438.2 L671.4 438.0 L670.7 438.2 L670.0 438.0 L669.3 438.4 L668.6 438.4 L667.9 439.5 L667.2 440.0 L666.5 440.6 L665.8 441.6 L665.1 441.6 L664.4 438.1 L663.7 438.2 L663.0 438.3 L662.3 438.0 L661.6 438.2 L660.9 438.1 L660.2 438.0 L659.5 438.0 L658.8 438.0 L658.1 438.0 L657.4 438.0 L656.7 438.1 L656.0 438.0 L655.3 438.0 L654.6 438.2 L653.9 438.2 L653.2 438.0 L652.5 438.3 L651.8 438.0 L651.1 438.5 L650.4 438.5 L649.7 439.1 L649.0 439.7 L648.3 439.7 L647.6 438.6 L646.9 438.3 L646.2 438.0 L645.5 438.0 L644.8 438.0 L644.1 438.0 L643.4 438.0 L642.7 438.0 L642.0 438.3 L641.3 438.0 L640.6 438.2 L639.9 438.3 L639.2 438.3 L638.5 438.0 L637.8 438.0 L637.1 438.0 L636.4 438.5 L635.7 438.7 L635.0 439.7 L634.3 439.7 L633.6 438.4 L632.9 438.0 L632.2 438.0 L631.5 438.3 L630.8 438.1 L630.1 438.0 L629.4 438.0 L628.7 438.3 L628.0 438.0 L627.3 438.0 L626.6 438.0 L625.9 438.2 L625.2 438.0 L624.5 438.3 L623.8 438.0 L623.1 438.1 L622.4 438.3 L621.7 438.1 L621.0 438.3 L620.3 438.1 L619.6 438.1 L618.9 438.0 L618.2 438.2 L617.5 438.4 L616.8 438.3 L616.1 439.2 L615.4 439.7 L614.7 438.9 L614.0 438.2 L613.3 438.2 L612.6 438.0 L611.9 438.7 L611.2 439.2 L610.5 438.9 L609.8 439.2 L609.1 440.2 L608.4 440.3 L607.7 443.4 L607.0 443.4 L606.3 438.6 L605.6 438.1 L604.9 438.3 L604.2 438.3 L603.5 438.1 L602.8 438.6 L602.1 438.8 L601.4 439.0 L600.7 439.7 L600.0 439.2 L599.3 438.0 L598.6 438.2 L597.9 438.3 L597.2 438.3 L596.5 438.2 L595.8 438.2 L595.1 438.3 L594.4 438.0 L593.7 438.0 L593.0 438.0 L592.3 438.0 L591.6 438.4 L590.9 438.8 L590.2 438.8 L589.5 438.0 L588.8 438.3 L588.1 438.3 L587.4 438.3 L586.7 438.0 L586.0 438.0 L585.3 438.0 L584.6 438.0 L583.9 438.2 L583.2 438.5 L582.5 438.7 L581.8 438.4 L581.1 438.3 L580.4 439.7 L579.7 439.2 L579.0 439.8 L578.3 440.0 L577.6 439.9 L576.9 440.6 L576.2 441.1 L575.5 441.6 L574.8 442.5 L574.1 442.5 L573.4 439.6 L572.7 440.0 L572.0 439.9 L571.3 440.5 L570.6 440.1 L569.9 441.3 L569.2 440.5 L568.5 442.3 L567.8 443.9 L567.1 444.1 L566.4 439.8 L565.7 438.0 L565.0 438.3 L564.3 438.0 L563.6 438.0 L562.9 438.5 L562.2 438.9 L561.5 439.5 L560.8 438.7 L560.1 440.3 L559.4 440.4 L558.7 440.5 L558.0 439.9 L557.3 440.6 L556.6 442.5 L555.9 440.4 L555.2 439.5 L554.5 440.7 L553.8 441.3 L553.1 441.4 L552.4 441.4 L551.7 442.8 L551.0 440.9 L550.3 442.5 L549.6 442.9 L548.9 442.4 L548.2 445.0 L547.5 446.1 L546.8 444.3 L546.1 438.2 L545.4 438.1 L544.7 438.2 L544.0 438.1 L543.3 438.0 L542.6 438.0 L541.9 438.0 L541.2 438.0 L540.5 438.0 L539.8 438.2 L539.1 438.0 L538.4 438.0 L537.7 438.0 L537.0 438.2 L536.3 438.2 L535.6 438.8 L534.9 438.6 L534.2 438.3 L533.5 438.2 L532.8 438.1 L532.1 438.3 L531.4 438.7 L530.7 438.8 L530.0 440.0 L529.3 440.2 L528.6 440.3 L527.9 441.3 L527.2 440.5 L526.5 442.7 L525.8 445.2 L525.1 445.2 L524.4 440.1 L523.7 439.9 L523.0 440.1 L522.3 440.6 L521.6 441.4 L520.9 443.4 L520.2 443.5 L519.5 439.7 L518.8 439.3 L518.1 440.1 L517.4 441.2 L516.7 440.7 L516.0 443.4 L515.3 443.4 L514.6 440.3 L513.9 440.1 L513.2 440.5 L512.5 441.5 L511.8 441.7 L511.1 440.2 L510.4 443.4 L509.7 439.8 L509.0 439.2 L508.3 439.1 L507.6 439.9 L506.9 441.5 L506.2 441.5 L505.5 442.4 L504.8 442.6 L504.1 442.0 L503.4 445.0 L502.7 441.3 L502.0 438.2 L501.3 438.3 L500.6 438.1 L499.9 438.3 L499.2 438.3 L498.5 438.3 L497.8 438.3 L497.1 438.0 L496.4 438.0 L495.7 438.2 L495.0 438.3 L494.3 438.0 L493.6 438.2 L492.9 438.3 L492.2 438.2 L491.5 438.0 L490.8 438.2 L490.1 438.3 L489.4 438.2 L488.7 438.3 L488.0 438.3 L487.3 438.0 L486.6 438.6 L485.9 439.0 L485.2 439.8 L484.5 439.8 L483.8 440.5 L483.1 440.0 L482.4 440.1 L481.7 441.4 L481.0 441.4 L480.3 441.4 L479.6 443.4 L478.9 442.9 L478.2 442.6 L477.5 444.0 L476.8 446.1 L476.1 446.1 L475.4 440.6 L474.7 438.0 L474.0 438.0 L473.3 438.3 L472.6 438.2 L471.9 438.3 L471.2 438.2 L470.5 438.0 L469.8 438.3 L469.1 438.0 L468.4 438.3 L467.7 438.3 L467.0 438.2 L466.3 438.0 L465.6 438.0 L464.9 438.2 L464.2 438.0 L463.5 438.0 L462.8 438.1 L462.1 438.2 L461.4 438.2 L460.7 438.3 L460.0 438.3 L459.3 438.4 L458.6 438.9 L457.9 439.8 L457.2 440.2 L456.5 441.2 L455.8 440.0 L455.1 440.8 L454.4 442.7 L453.7 441.8 L453.0 442.4 L452.3 441.7 L451.6 442.1 L450.9 444.4 L450.2 445.2 L449.5 446.7 L448.8 443.6 L448.1 438.0 L447.4 438.1 L446.7 438.6 L446.0 439.3 L445.3 440.6 L444.6 439.7 L443.9 440.6 L443.2 442.9 L442.5 443.9 L441.8 441.6 L441.1 438.2 L440.4 438.2 L439.7 438.0 L439.0 438.2 L438.3 438.3 L437.6 438.1 L436.9 438.0 L436.2 438.0 L435.5 438.0 L434.8 438.9 L434.1 439.2 L433.4 439.6 L432.7 439.8 L432.0 441.4 L431.3 442.0 L430.6 442.3 L429.9 443.3 L429.2 441.0 L428.5 444.2 L427.8 441.9 L427.1 444.5 L426.4 445.7 L425.7 442.9 L425.0 448.3 L424.3 448.3 L423.6 443.8 L422.9 438.2 L422.2 438.4 L421.5 438.1 L420.8 439.1 L420.1 438.5 L419.4 439.5 L418.7 440.6 L418.0 440.8 L417.3 438.2 L416.6 438.0 L415.9 438.3 L415.2 438.2 L414.5 438.3 L413.8 438.1 L413.1 438.0 L412.4 438.0 L411.7 438.0 L411.0 438.0 L410.3 438.0 L409.6 438.0 L408.9 438.3 L408.2 438.3 L407.5 438.7 L406.8 438.5 L406.1 439.1 L405.4 439.7 L404.7 439.0 L404.0 438.2 L403.3 438.0 L402.6 438.0 L401.9 439.2 L401.2 438.8 L400.5 440.0 L399.8 439.7 L399.1 441.4 L398.4 440.7 L397.7 440.6 L397.0 441.9 L396.3 442.7 L395.6 444.3 L394.9 447.2 L394.2 447.2 L393.5 442.3 L392.8 438.2 L392.1 438.2 L391.4 438.3 L390.7 438.3 L390.0 438.7 L389.3 439.5 L388.6 439.3 L387.9 439.4 L387.2 440.5 L386.5 441.6 L385.8 440.7 L385.1 438.3 L384.4 438.3 L383.7 438.1 L383.0 438.0 L382.3 438.0 L381.6 438.0 L380.9 438.0 L380.2 439.4 L379.5 439.6 L378.8 439.4 L378.1 439.6 L377.4 441.4 L376.7 443.4 L376.0 441.8 L375.3 441.2 L374.6 442.0 L373.9 440.6 L373.2 441.5 L372.5 445.2 L371.8 441.9 L371.1 438.1 L370.4 438.1 L369.7 438.0 L369.0 438.0 L368.3 438.0 L367.6 438.6 L366.9 438.8 L366.2 439.7 L365.5 439.8 L364.8 439.8 L364.1 440.4 L363.4 442.5 L362.7 440.6 L362.0 439.9 L361.3 441.3 L360.6 443.0 L359.9 445.1 L359.2 446.2 L358.5 446.9 L357.8 446.1 L357.1 448.2 L356.4 451.7 L355.7 447.7 L355.0 439.4 L354.3 440.1 L353.6 440.6 L352.9 441.9 L352.2 443.1 L351.5 442.4 L350.8 446.1 L350.1 446.1 L349.4 440.5 L348.7 440.7 L348.0 439.7 L347.3 441.8 L346.6 443.1 L345.9 445.2 L345.2 445.2 L344.5 439.6 L343.8 441.9 L343.1 441.9 L342.4 442.5 L341.7 444.9 L341.0 445.8 L340.3 444.0 L339.6 449.6 L338.9 448.2 L338.2 442.6 L337.5 442.7 L336.8 443.8 L336.1 443.5 L335.4 444.7 L334.7 447.9 L334.0 447.6 L333.3 440.2 L332.6 441.0 L331.9 441.8 L331.2 443.5 L330.5 442.1 L329.8 445.2 L329.1 447.4 L328.4 449.8 L327.7 444.2 L327.0 438.3 L326.3 439.7 L325.6 441.2 L324.9 440.1 L324.2 442.4 L323.5 443.7 L322.8 442.1 L322.1 446.1 L321.4 443.2 L320.7 449.8 L320.0 445.3 L319.3 442.7 L318.6 443.1 L317.9 442.9 L317.2 445.7 L316.5 447.9 L315.8 443.5 L315.1 442.7 L314.4 444.1 L313.7 442.1 L313.0 445.1 L312.3 447.3 L311.6 445.9 L310.9 451.6 L310.2 451.6 L309.5 443.5 L308.8 443.5 L308.1 441.4 L307.4 445.7 L306.7 447.9 L306.0 445.2 L305.3 440.7 L304.6 440.7 L303.9 441.7 L303.2 443.0 L302.5 444.9 L301.8 444.2 L301.1 446.0 L300.4 449.8 L299.7 445.4 L299.0 440.2 L298.3 441.3 L297.6 444.1 L296.9 443.2 L296.2 444.7 L295.5 444.0 L294.8 449.6 L294.1 446.5 L293.4 452.3 L292.7 445.8 L292.0 439.7 L291.3 441.0 L290.6 442.8 L289.9 442.3 L289.2 444.1 L288.5 445.2 L287.8 449.8 L287.1 449.8 L286.4 441.7 L285.7 439.8 L285.0 439.7 L284.3 441.7 L283.6 442.9 L282.9 443.4 L282.2 442.0 L281.5 447.0 L280.8 445.2 L280.1 440.5 L279.4 442.7 L278.7 442.0 L278.0 444.1 L277.3 443.5 L276.6 446.6 L275.9 448.9 L275.2 448.9 L274.5 443.1 L273.8 440.9 L273.1 443.2 L272.4 441.7 L271.7 444.0 L271.0 447.9 L270.3 447.9 L269.6 443.4 L268.9 442.6 L268.2 442.4 L267.5 445.0 L266.8 443.0 L266.1 446.2 L265.4 446.6 L264.7 450.7 L264.0 447.5 L263.3 441.3 L262.6 438.3 L261.9 438.1 L261.2 438.3 L260.5 438.0 L259.8 438.0 L259.1 438.3 L258.4 438.0 L257.7 438.6 L257.0 439.6 L256.3 439.6 L255.6 439.5 L254.9 441.5 L254.2 440.1 L253.5 443.4 L252.8 441.6 L252.1 438.2 L251.4 438.3 L250.7 439.8 L250.0 440.9 L249.3 441.2 L248.6 442.8 L247.9 441.5 L247.2 443.5 L246.5 446.1 L245.8 444.1 L245.1 440.4 L244.4 440.1 L243.7 440.6 L243.0 444.1 L242.3 441.9 L241.6 443.1 L240.9 446.7 L240.2 447.6 L239.5 445.2 L238.8 450.7 L238.1 450.7 L237.4 441.4 L236.7 438.1 L236.0 438.3 L235.3 438.1 L234.6 438.1 L233.9 438.1 L233.2 439.0 L232.5 440.9 L231.8 440.7 L231.1 441.6 L230.4 442.5 L229.7 441.6 L229.0 445.3 L228.3 445.9 L227.6 447.9 L226.9 444.2 L226.2 442.8 L225.5 441.9 L224.8 443.2 L224.1 445.2 L223.4 445.3 L222.7 447.5 L222.0 451.6 L221.3 451.6 L220.6 445.1 L219.9 438.1 L219.2 439.1 L218.5 439.8 L217.8 439.9 L217.1 440.2 L216.4 442.3 L215.7 441.8 L215.0 446.1 L214.3 446.1 L213.6 441.7 L212.9 439.4 L212.2 439.3 L211.5 439.9 L210.8 442.2 L210.1 442.7 L209.4 442.7 L208.7 443.2 L208.0 446.1 L207.3 446.1 L206.6 441.9 L205.9 441.0 L205.2 440.9 L204.5 440.8 L203.8 444.3 L203.1 441.6 L202.4 445.7 L201.7 447.9 L201.0 446.3 L200.3 442.6 L199.6 443.8 L198.9 442.9 L198.2 443.4 L197.5 447.2 L196.8 444.0 L196.1 449.2 L195.4 451.6 L194.7 447.4 L194.0 439.7 L193.3 440.9 L192.6 440.3 L191.9 442.3 L191.2 440.4 L190.5 444.3 L189.8 442.5 L189.1 438.0 L188.4 438.3 L187.7 438.0 L187.0 438.1 L186.3 438.0 L185.6 438.3 L184.9 438.2 L184.2 438.1 L183.5 438.3 L182.8 438.1 L182.1 438.0 L181.4 438.0 L180.7 438.2 L180.0 438.3 L179.3 438.3 L178.6 438.4 L177.9 438.7 L177.2 439.7 L176.5 439.3 L175.8 440.8 L175.1 441.3 L174.4 440.5 L173.7 442.5 L173.0 443.9 L172.3 443.3 L171.6 442.4 L170.9 444.0 L170.2 446.2 L169.5 445.0 L168.8 446.9 L168.1 446.1 L167.4 449.6 L166.7 442.6 L166.0 438.2 L165.3 438.8 L164.6 440.0 L163.9 440.5 L163.2 441.9 L162.5 444.1 L161.8 443.9 L161.1 443.9 L160.4 447.9 L159.7 444.8 L159.0 438.3 L158.3 439.4 L157.6 439.9 L156.9 440.4 L156.2 439.6 L155.5 441.6 L154.8 440.4 L154.1 438.0 L153.4 438.0 L152.7 438.0 L152.0 438.0 L151.3 438.0 L150.6 438.0 L149.9 438.3 L149.2 438.1 L148.5 438.0 L147.8 438.1 L147.1 438.2 L146.4 439.2 L145.7 439.3 L145.0 440.8 L144.3 439.9 L143.6 440.4 L142.9 441.3 L142.2 442.2 L141.5 443.0 L140.8 442.6 L140.1 443.9 L139.4 444.4 L138.7 446.1 L138.0 446.1 L137.3 439.4 L136.6 438.3 L135.9 438.3 L135.2 438.3 L134.5 438.3 L133.8 438.0 L133.1 438.1 L132.4 438.8 L131.7 439.7 L131.0 440.0 L130.3 439.8 L129.6 441.2 L128.9 442.0 L128.2 443.0 L127.5 443.9 L126.8 441.5 L126.1 442.4 L125.4 444.4 L124.7 445.7 L124.0 445.9 L123.3 443.5 L122.6 446.9 L121.9 450.7 L121.2 450.7 L120.5 442.3 L119.8 438.3 L119.1 438.0 L118.4 438.8 L117.7 438.7 L117.0 440.3 L116.3 441.6 L115.6 441.5 L114.9 441.7 L114.2 442.0 L113.5 446.1 L112.8 443.7 L112.1 438.0 L111.4 438.0 L110.7 438.0 L110.0 438.3 L109.3 438.7 L108.6 438.8 L107.9 439.1 L107.2 439.8 L106.5 439.7 L105.8 442.5 L105.1 442.5 L104.4 438.8 L103.7 438.0 L103.0 438.0 L102.3 438.0 L101.6 438.0 L100.9 438.0 L100.2 438.8 L99.5 438.8 L98.8 439.1 L98.1 439.0 L97.4 440.6 L96.7 441.6 L96.0 441.7 L95.3 441.2 L94.6 441.9 L93.9 442.2 L93.2 441.0 L92.5 444.3 L91.8 441.3 L91.1 439.1 L90.4 438.9 L89.7 439.5 L89.0 439.3 L88.3 441.5 L87.6 442.5 L86.9 440.0 L86.2 438.8 L85.5 440.4 L84.8 439.7 L84.1 441.6 L83.4 442.5 L82.7 440.3 L82.0 438.3 L81.3 438.5 L80.6 438.8 L79.9 439.7 L79.2 439.8 L78.5 440.6 L77.8 438.7 L77.1 438.0 L76.4 438.2 L75.7 438.0 L75.0 438.0 L74.3 438.2 L73.6 438.1 L72.9 438.0 L72.2 438.0 L71.5 438.1 L70.8 438.3 L70.1 438.3 L69.4 438.2 L68.7 438.0 L68.0 438.2 L67.3 438.2 L66.6 438.1 L65.9 438.8 L65.2 438.8 L64.5 438.3 L63.8 438.0 L63.1 438.2 L62.4 438.2 L61.7 438.3 L61.0 438.3 L60.3 438.0 L59.6 438.0 L58.9 438.2 L58.2 438.0 L57.5 438.0 L56.8 438.0 L56.1 438.1 L55.4 438.2 L54.7 438.3 L54.0 438.3 L53.3 438.0 L52.6 438.0 L51.9 438.3 L51.2 438.0 L50.5 438.2 L49.8 438.0 L49.1 438.1 L48.4 438.0 L47.7 438.1 L47.0 438.1Z" fill="#2b2e35"/>
<path d="M962.0 435.7 L962.7 436.0 L963.4 435.7 L964.1 435.7 L964.8 436.0 L965.5 435.9 L966.2 435.7 L966.9 436.0 L967.6 431.7 L968.3 428.5 L969.0 428.5 L969.7 433.3 L970.4 434.2 L971.1 433.2 L971.8 434.1 L972.5 434.6 L973.2 434.7 L973.9 435.0 L974.6 435.8 L975.3 436.0 L976.0 435.9 L976.7 435.6 L977.4 435.8 L978.1 434.1 L978.8 434.1 L979.5 435.6 L980.2 435.5 L980.9 435.7 L981.6 435.7 L982.3 435.6 L983.0 436.0 L983.7 436.0 L984.4 435.6 L985.1 436.0 L985.8 436.0 L986.5 435.8 L987.2 436.0 L987.9 435.7 L988.6 435.8 L989.3 435.6 L990.0 435.9 L990.7 435.7 L990.7 438.1 L990.0 438.0 L989.3 438.0 L988.6 438.0 L987.9 438.0 L987.2 438.0 L986.5 438.0 L985.8 438.3 L985.1 438.0 L984.4 438.4 L983.7 438.0 L983.0 438.2 L982.3 438.0 L981.6 438.2 L980.9 438.3 L980.2 438.2 L979.5 438.6 L978.8 439.9 L978.1 439.9 L977.4 438.3 L976.7 438.0 L976.0 438.0 L975.3 438.1 L974.6 438.2 L973.9 439.1 L973.2 439.2 L972.5 439.6 L971.8 439.4 L971.1 439.6 L970.4 440.2 L969.7 440.9 L969.0 445.4 L968.3 445.4 L967.6 441.8 L966.9 438.1 L966.2 438.2 L965.5 438.3 L964.8 438.4 L964.1 438.3 L963.4 438.3 L962.7 438.0 L962.0 438.0Z" fill="#2b2e35"/>
</svg>
<div class="a" style="left:826px;top:421.5px;width:6px;height:31.5px;background:#fafafa;filter:blur(1px)"></div>
<div class="a" style="left:832px;top:421.5px;width:28px;height:31.5px;background:#f2f2f3;filter:blur(1px)"></div>
<div class="a" style="left:858px;top:423px;width:80px;height:19px;background:#e6e6e8;filter:blur(2px)"></div>
<div class="a" style="left:938px;top:421.5px;width:24px;height:18px;background:#f8f8f9;filter:blur(1.5px)"></div>
<div class="a" style="left:42.5px;top:456px;width:949px;height:3.5px;background:#6e6e72;border-radius:2px"></div>
<div class="a" style="left:46.3px;top:408px;width:1.6px;height:45px;background:#5a62d8"></div>
<svg style="left:42px;top:405px" width="11" height="6" viewBox="0 0 11 6"><path d="M0 0H11L5.5 6Z" fill="#5a62d8"/></svg>

<div class="t" style="left:473.78px;top:12.28px;font-size:8.50px;letter-spacing:-0.12px;font-weight:normal;color:#3a3a3e;-webkit-text-stroke:0.22px #3a3a3e">Create</div>
<div class="t" style="left:512.13px;top:12.37px;font-size:8.38px;letter-spacing:-0.17px;font-weight:normal;color:#3a3a3e;-webkit-text-stroke:0.22px #3a3a3e">Edit</div>
<div class="t" style="left:540.12px;top:12.33px;font-size:8.44px;letter-spacing:-0.16px;font-weight:normal;color:#3a3a3e;-webkit-text-stroke:0.22px #3a3a3e">Record</div>
<div class="t" style="left:739.81px;top:12.52px;font-size:8.57px;letter-spacing:-0.15px;font-weight:normal;color:#5c5c60;-webkit-text-stroke:0.22px #5c5c60">Earn $50</div>
<div class="t" style="left:855.62px;top:12.58px;font-size:8.50px;letter-spacing:-0.22px;font-weight:normal;color:#5c5c60;-webkit-text-stroke:0.22px #5c5c60">Share</div>
<div class="t" style="left:907.16px;top:12.29px;font-size:8.48px;letter-spacing:-0.13px;font-weight:normal;color:#fff6e8;-webkit-text-stroke:0.22px #fff6e8">Upgrade</div>
<div class="t" style="left:969.82px;top:12.28px;font-size:8.50px;letter-spacing:-0.15px;font-weight:normal;color:#fff;-webkit-text-stroke:0.22px #fff">Done</div>
<div class="t" style="left:53.53px;top:51.08px;font-size:10.97px;letter-spacing:-0.23px;font-weight:bold;color:#1e1e22">Audio</div>
<div class="t" style="left:94.76px;top:86.49px;font-size:8.60px;letter-spacing:-0.12px;font-weight:normal;color:#fff;-webkit-text-stroke:0.22px #fff">AI voice</div>
<div class="t" style="left:200.85px;top:86.38px;font-size:8.73px;letter-spacing:-0.07px;font-weight:normal;color:#505054;-webkit-text-stroke:0.22px #505054">Upload</div>
<div class="t" style="left:67.85px;top:131.29px;font-size:9.95px;letter-spacing:0.02px;font-weight:normal;color:#222226;-webkit-text-stroke:0.35px #222226">Voice</div>
<div class="t" style="left:84.46px;top:159.70px;font-size:8.59px;letter-spacing:-0.20px;font-weight:normal;color:#555559;-webkit-text-stroke:0.22px #555559">Voice Cloning</div>
<div class="t" style="left:195.96px;top:159.72px;font-size:8.57px;letter-spacing:-0.23px;font-weight:normal;color:#555559;-webkit-text-stroke:0.22px #555559">Voiceover</div>
<div class="t" style="left:67.95px;top:204.89px;font-size:9.78px;letter-spacing:-0.04px;font-weight:normal;color:#222226;-webkit-text-stroke:0.35px #222226">Audio Cleanup</div>
<div class="t" style="left:53.56px;top:234.14px;font-size:8.30px;letter-spacing:-0.06px;font-weight:normal;color:#262628;-webkit-text-stroke:0.22px #262628">Audio Cleanup</div>
<div class="t" style="left:78.03px;top:263.33px;font-size:8.44px;letter-spacing:-0.06px;font-weight:normal;color:#262628;-webkit-text-stroke:0.22px #262628">Dolby-powered Enhancement</div>
<div class="t" style="left:61.82px;top:297.73px;font-size:8.55px;letter-spacing:-0.07px;font-weight:normal;color:#38383c;-webkit-text-stroke:0.22px #38383c">Real-time noise reduction</div>
<div class="t" style="left:838.71px;top:51.19px;font-size:9.07px;letter-spacing:0.20px;font-weight:bold;color:#1e1e22">Effects</div>
<div class="t" style="left:839.26px;top:77.94px;font-size:7.83px;letter-spacing:0.19px;font-weight:normal;color:#333336;-webkit-text-stroke:0.22px #333336">Volume</div>
<div class="t" style="left:977.87px;top:79.11px;font-size:7.87px;letter-spacing:0.17px;font-weight:normal;color:#9a9a9e;-webkit-text-stroke:0.22px #9a9a9e">Fit</div>
<div class="t" style="left:967.17px;top:98.24px;font-size:8.43px;letter-spacing:0.02px;font-weight:normal;color:#333336;-webkit-text-stroke:0.22px #333336">100</div>
<div class="t" style="left:855.55px;top:139.64px;font-size:8.19px;letter-spacing:0.04px;font-weight:normal;color:#333336;-webkit-text-stroke:0.22px #333336">Equalizer</div>
<div class="t" style="left:855.77px;top:172.99px;font-size:8.60px;letter-spacing:-0.23px;font-weight:normal;color:#333336;-webkit-text-stroke:0.22px #333336">Compressor</div>
<div class="t" style="left:855.78px;top:208.42px;font-size:8.44px;letter-spacing:-0.07px;font-weight:normal;color:#333336;-webkit-text-stroke:0.22px #333336">Comerance</div>
<div class="t" style="left:290.14px;top:249.67px;font-size:8.03px;letter-spacing:0.03px;font-weight:normal;color:#f4f4f6;-webkit-text-stroke:0.05px #f4f4f6">Original</div>
<div class="t" style="left:290.10px;top:307.82px;font-size:8.15px;letter-spacing:-0.11px;font-weight:normal;color:#f4f4f6;-webkit-text-stroke:0.05px #f4f4f6">Enhanced</div>
<div class="t" style="left:67.36px;top:382.30px;font-size:8.58px;letter-spacing:-0.19px;font-weight:normal;color:#333336;-webkit-text-stroke:0.22px #333336">Split</div>
<div class="t" style="left:557.67px;top:384.44px;font-size:8.18px;letter-spacing:0.19px;font-weight:normal;color:#8a8a8e;-webkit-text-stroke:0.22px #8a8a8e">00:00.0</div>
<div class="t" style="left:591.20px;top:382.94px;font-size:8.30px;letter-spacing:0.32px;font-weight:normal;color:#8a8a8e;-webkit-text-stroke:0.22px #8a8a8e">/</div>
<div class="t" style="left:598.48px;top:382.52px;font-size:8.09px;letter-spacing:0.14px;font-weight:normal;color:#8a8a8e;-webkit-text-stroke:0.22px #8a8a8e">01:00.0</div>
<div class="t" style="left:978.99px;top:383.09px;font-size:8.83px;letter-spacing:-0.00px;font-weight:normal;color:#333336;-webkit-text-stroke:0.22px #333336">Fit</div>
<div class="t" style="left:371.21px;top:231.20px;font-size:6.47px;letter-spacing:-0.25px;font-weight:normal;color:#98989c;-webkit-text-stroke:0.22px #98989c">10s</div>
<div class="t" style="left:465.08px;top:231.24px;font-size:6.42px;letter-spacing:-0.30px;font-weight:normal;color:#98989c;-webkit-text-stroke:0.22px #98989c">20s</div>
<div class="t" style="left:559.14px;top:231.26px;font-size:6.40px;letter-spacing:-0.31px;font-weight:normal;color:#98989c;-webkit-text-stroke:0.22px #98989c">30s</div>
<div class="t" style="left:653.24px;top:231.28px;font-size:6.37px;letter-spacing:-0.34px;font-weight:normal;color:#98989c;-webkit-text-stroke:0.22px #98989c">40s</div>
<div class="t" style="left:747.14px;top:231.26px;font-size:6.40px;letter-spacing:-0.31px;font-weight:normal;color:#98989c;-webkit-text-stroke:0.22px #98989c">50s</div>
<div class="t" style="left:841.08px;top:231.24px;font-size:6.42px;letter-spacing:-0.30px;font-weight:normal;color:#98989c;-webkit-text-stroke:0.22px #98989c">60s</div>
<div class="t" style="left:936.78px;top:231.24px;font-size:6.42px;letter-spacing:-0.30px;font-weight:normal;color:#98989c;-webkit-text-stroke:0.22px #98989c">70s</div>
<div class="t" style="left:198.91px;top:409.24px;font-size:6.54px;letter-spacing:-0.31px;font-weight:normal;color:#98989c;-webkit-text-stroke:0.22px #98989c">10s</div>
<div class="t" style="left:355.08px;top:409.28px;font-size:6.49px;letter-spacing:-0.35px;font-weight:normal;color:#98989c;-webkit-text-stroke:0.22px #98989c">20s</div>
<div class="t" style="left:511.84px;top:409.30px;font-size:6.48px;letter-spacing:-0.37px;font-weight:normal;color:#98989c;-webkit-text-stroke:0.22px #98989c">30s</div>
<div class="t" style="left:668.24px;top:409.32px;font-size:6.45px;letter-spacing:-0.40px;font-weight:normal;color:#98989c;-webkit-text-stroke:0.22px #98989c">40s</div>
<div class="t" style="left:824.84px;top:409.30px;font-size:6.48px;letter-spacing:-0.37px;font-weight:normal;color:#98989c;-webkit-text-stroke:0.22px #98989c">50s</div>
<div class="t" style="left:982.32px;top:409.32px;font-size:6.45px;letter-spacing:-0.63px;font-weight:normal;color:#98989c;-webkit-text-stroke:0.22px #98989c">1m</div>
<div class="t" style="left:5.96px;top:66.39px;font-size:7.77px;letter-spacing:-0.17px;font-weight:normal;color:#8c8c90;-webkit-text-stroke:0.22px #8c8c90">AI Tools</div>
<div class="t" style="left:9.57px;top:110.33px;font-size:7.50px;letter-spacing:0.00px;font-weight:normal;color:#8c8c90;-webkit-text-stroke:0.22px #8c8c90">Script</div>
<div class="t" style="left:9.91px;top:155.03px;font-size:7.50px;letter-spacing:-0.00px;font-weight:normal;color:#8c8c90;-webkit-text-stroke:0.22px #8c8c90">Video</div>
<div class="t" style="left:9.56px;top:200.40px;font-size:7.88px;letter-spacing:-0.15px;font-weight:normal;color:#5a62d6;-webkit-text-stroke:0.22px #5a62d6">Audio</div>
<div class="t" style="left:8.71px;top:245.43px;font-size:7.50px;letter-spacing:0.00px;font-weight:normal;color:#8c8c90;-webkit-text-stroke:0.22px #8c8c90">Image</div>
<div class="t" style="left:4.24px;top:288.72px;font-size:7.97px;letter-spacing:-0.07px;font-weight:normal;color:#8c8c90;-webkit-text-stroke:0.22px #8c8c90">Subtitles</div>
<div class="t" style="left:12.38px;top:333.83px;font-size:7.50px;letter-spacing:0.00px;font-weight:normal;color:#8c8c90;-webkit-text-stroke:0.22px #8c8c90">Text</div>
<div class="t" style="left:4.04px;top:378.53px;font-size:7.50px;letter-spacing:0.00px;font-weight:normal;color:#8c8c90;-webkit-text-stroke:0.22px #8c8c90">Elements</div>
<div class="t" style="left:3.98px;top:423.05px;font-size:7.71px;letter-spacing:-0.20px;font-weight:normal;color:#8c8c90;-webkit-text-stroke:0.22px #8c8c90">Brand Kit</div>
</body></html>
